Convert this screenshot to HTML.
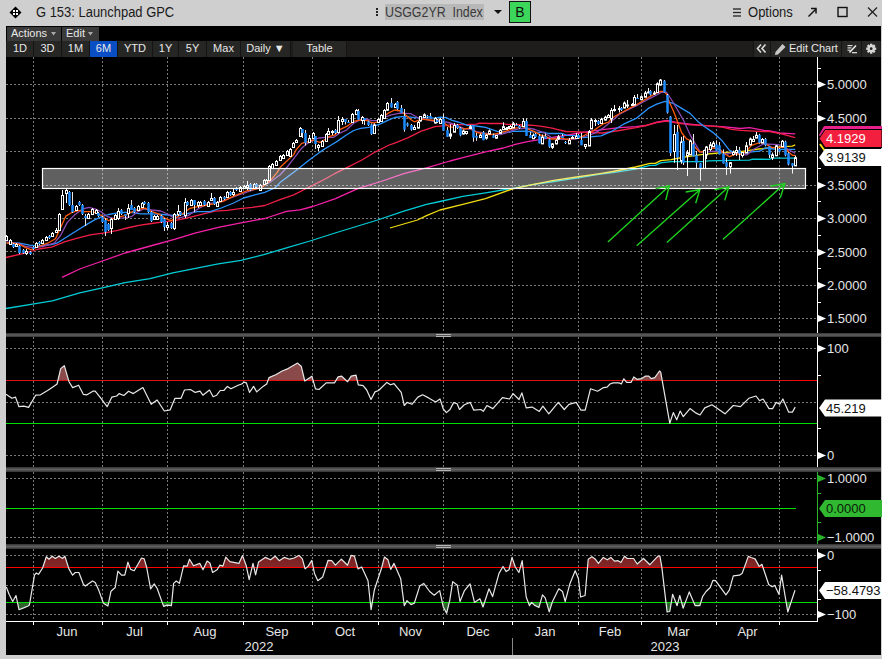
<!DOCTYPE html>
<html><head><meta charset="utf-8">
<style>
html,body{margin:0;padding:0;}
body{width:882px;height:659px;overflow:hidden;background:#cfcfcf;position:relative;font-family:"Liberation Sans",sans-serif;}
.abs{position:absolute;}
#main{position:absolute;left:6px;top:26px;width:875px;height:629px;background:#000;}
svg text{font-family:"Liberation Sans",sans-serif;}
.g{stroke:#7a7a7a;stroke-width:1;stroke-dasharray:2 2;}
.gv{stroke:#7a7a7a;stroke-width:1;stroke-dasharray:2 2;}
.tb{position:absolute;height:16px;top:41px;background:#262624;color:#e8e8e8;font-size:11px;line-height:14px;text-align:center;box-sizing:border-box;border-right:1px solid #141414;}
.tb1{position:absolute;top:27px;height:14px;background:#3a3a3a;color:#e8e8e8;font-size:11px;line-height:12px;box-sizing:border-box;padding-left:4px;}
.tri{display:inline-block;width:0;height:0;border-left:3px solid transparent;border-right:3px solid transparent;border-top:4px solid #aaa;vertical-align:middle;margin-left:4px;}
</style></head><body>
<!-- title bar -->
<svg class="abs" style="left:0;top:0" width="882" height="26">
 <polygon points="15.5,6.5 21.5,12.5 15.5,18.5 9.5,12.5" fill="#000"/><g fill="#fff"><rect x="13" y="10" width="2" height="2"/><rect x="16" y="10" width="2" height="2"/><rect x="13" y="13" width="2" height="2"/><rect x="16" y="13" width="2" height="2"/></g>
 <rect x="376" y="8" width="2" height="2" fill="#222"/><rect x="376" y="11" width="2" height="2" fill="#222"/><rect x="376" y="14" width="2" height="2" fill="#222"/>
 <rect x="385" y="4" width="99" height="16" fill="#b8b8b8"/>
 <polygon points="494,10 502,10 498,14" fill="#111"/>
 <rect x="509.5" y="1.5" width="21" height="21" fill="#3cd75a" stroke="#111" stroke-width="1"/>
 <g stroke="#222" stroke-width="1.3"><line x1="733" y1="9" x2="741" y2="9"/><line x1="733" y1="12.5" x2="741" y2="12.5"/><line x1="733" y1="16" x2="741" y2="16"/></g>
 <g stroke="#111" stroke-width="1.5" fill="none"><line x1="808.5" y1="16.5" x2="816" y2="9"/><polyline points="811,8.5 816,8.5 816,13.5"/></g>
 <rect x="838" y="7.5" width="9" height="9" fill="none" stroke="#111" stroke-width="1.4"/>
 <g stroke="#222" stroke-width="1.2"><line x1="868" y1="7.5" x2="877" y2="16.5"/><line x1="877" y1="7.5" x2="868" y2="16.5"/></g>
</svg>
<div class="abs" style="left:36px;top:4px;font-size:14px;line-height:17px;color:#1a1a1a;transform-origin:0 0;transform:scaleX(0.925);white-space:nowrap;">G 153: Launchpad GPC</div>
<div class="abs" style="left:385px;top:4px;font-size:14px;line-height:17px;color:#3a3a3a;transform-origin:0 0;transform:scaleX(0.885);white-space:nowrap;">USGG2YR&nbsp;&nbsp;Index</div>
<div class="abs" style="left:509px;top:3px;width:22px;text-align:center;font-size:14px;line-height:18px;color:#111;">B</div>
<div class="abs" style="left:748px;top:4px;font-size:14px;line-height:17px;color:#1a1a1a;transform-origin:0 0;transform:scaleX(0.93);white-space:nowrap;">Options</div>
<div id="main"></div>
<!-- toolbar row 1 -->
<div class="tb1" style="left:7px;width:54px;">Actions</div>
<div class="tb1" style="left:62px;width:37px;">Edit</div>
<!-- toolbar row 2 -->
<div class="abs" style="left:6px;top:41px;width:875px;height:16px;background:#1e1d1b;"></div>
<div class="tb" style="left:7px;width:27px;">1D</div>
<div class="tb" style="left:34px;width:28px;">3D</div>
<div class="tb" style="left:62px;width:28px;">1M</div>
<div class="tb" style="left:90px;width:28px;background:#0a4ec4;">6M</div>
<div class="tb" style="left:118px;width:35px;">YTD</div>
<div class="tb" style="left:153px;width:26px;">1Y</div>
<div class="tb" style="left:179px;width:28px;">5Y</div>
<div class="tb" style="left:207px;width:34px;">Max</div>
<div class="tb" style="left:241px;width:50px;">Daily &#9660;</div>
<div class="tb" style="left:293px;width:54px;">Table</div>
<div class="tb" style="left:753px;width:18px;border-left:1px solid #141414;"></div>
<div class="tb" style="left:771px;width:71px;text-align:left;padding-left:18px;">Edit Chart</div>
<div class="tb" style="left:842px;width:20px;"></div>
<div class="tb" style="left:862px;width:18px;border-right:none;"></div>
<svg class="abs" style="left:0;top:0" width="882" height="60">
 <polygon points="51,32 56,32 53.5,35.5" fill="#a8a8a8"/>
 <polygon points="88,32 93,32 90.5,35.5" fill="#a8a8a8"/>
 <g stroke="#dcdcdc" stroke-width="1.6" fill="none"><polyline points="761,44.5 757.5,48.5 761,52.5"/><polyline points="765.5,44.5 762,48.5 765.5,52.5"/></g>
 <g><polygon points="782.5,44 785.5,47 778,54.5 775,55 775.5,52" fill="#c8c8c8"/></g>
 <g fill="#d8d8d8"><rect x="847.5" y="45" width="5" height="1.2"/><rect x="847.5" y="47.3" width="4" height="1.2"/><rect x="847.5" y="49.6" width="3" height="1.2"/><rect x="852" y="52" width="5" height="1.3"/></g>
 <polyline points="856,45.5 849.5,52.5" stroke="#e8e8e8" stroke-width="1.6" fill="none"/>
 <g transform="translate(871.2,48.7)">
  <g fill="#d8d8d8">
   <rect x="-1.2" y="-5" width="2.4" height="10"/><rect x="-1.2" y="-5" width="2.4" height="10" transform="rotate(45)"/>
   <rect x="-1.2" y="-5" width="2.4" height="10" transform="rotate(90)"/><rect x="-1.2" y="-5" width="2.4" height="10" transform="rotate(135)"/>
   <circle r="3.6"/>
  </g>
  <circle r="1.4" fill="#222"/>
 </g>
</svg>
<svg class="abs" style="left:0;top:0" width="882" height="659">
<line x1="33.5" y1="57" x2="33.5" y2="333" class="gv"/>
<line x1="33.5" y1="337" x2="33.5" y2="467" class="gv"/>
<line x1="33.5" y1="472" x2="33.5" y2="544" class="gv"/>
<line x1="33.5" y1="549" x2="33.5" y2="621" class="gv"/>
<line x1="102.5" y1="57" x2="102.5" y2="333" class="gv"/>
<line x1="102.5" y1="337" x2="102.5" y2="467" class="gv"/>
<line x1="102.5" y1="472" x2="102.5" y2="544" class="gv"/>
<line x1="102.5" y1="549" x2="102.5" y2="621" class="gv"/>
<line x1="167.5" y1="57" x2="167.5" y2="333" class="gv"/>
<line x1="167.5" y1="337" x2="167.5" y2="467" class="gv"/>
<line x1="167.5" y1="472" x2="167.5" y2="544" class="gv"/>
<line x1="167.5" y1="549" x2="167.5" y2="621" class="gv"/>
<line x1="243.5" y1="57" x2="243.5" y2="333" class="gv"/>
<line x1="243.5" y1="337" x2="243.5" y2="467" class="gv"/>
<line x1="243.5" y1="472" x2="243.5" y2="544" class="gv"/>
<line x1="243.5" y1="549" x2="243.5" y2="621" class="gv"/>
<line x1="312.5" y1="57" x2="312.5" y2="333" class="gv"/>
<line x1="312.5" y1="337" x2="312.5" y2="467" class="gv"/>
<line x1="312.5" y1="472" x2="312.5" y2="544" class="gv"/>
<line x1="312.5" y1="549" x2="312.5" y2="621" class="gv"/>
<line x1="378.5" y1="57" x2="378.5" y2="333" class="gv"/>
<line x1="378.5" y1="337" x2="378.5" y2="467" class="gv"/>
<line x1="378.5" y1="472" x2="378.5" y2="544" class="gv"/>
<line x1="378.5" y1="549" x2="378.5" y2="621" class="gv"/>
<line x1="443.5" y1="57" x2="443.5" y2="333" class="gv"/>
<line x1="443.5" y1="337" x2="443.5" y2="467" class="gv"/>
<line x1="443.5" y1="472" x2="443.5" y2="544" class="gv"/>
<line x1="443.5" y1="549" x2="443.5" y2="621" class="gv"/>
<line x1="512.5" y1="57" x2="512.5" y2="333" class="gv"/>
<line x1="512.5" y1="337" x2="512.5" y2="467" class="gv"/>
<line x1="512.5" y1="472" x2="512.5" y2="544" class="gv"/>
<line x1="512.5" y1="549" x2="512.5" y2="621" class="gv"/>
<line x1="578.5" y1="57" x2="578.5" y2="333" class="gv"/>
<line x1="578.5" y1="337" x2="578.5" y2="467" class="gv"/>
<line x1="578.5" y1="472" x2="578.5" y2="544" class="gv"/>
<line x1="578.5" y1="549" x2="578.5" y2="621" class="gv"/>
<line x1="641.5" y1="57" x2="641.5" y2="333" class="gv"/>
<line x1="641.5" y1="337" x2="641.5" y2="467" class="gv"/>
<line x1="641.5" y1="472" x2="641.5" y2="544" class="gv"/>
<line x1="641.5" y1="549" x2="641.5" y2="621" class="gv"/>
<line x1="716.5" y1="57" x2="716.5" y2="333" class="gv"/>
<line x1="716.5" y1="337" x2="716.5" y2="467" class="gv"/>
<line x1="716.5" y1="472" x2="716.5" y2="544" class="gv"/>
<line x1="716.5" y1="549" x2="716.5" y2="621" class="gv"/>
<line x1="779.5" y1="57" x2="779.5" y2="333" class="gv"/>
<line x1="779.5" y1="337" x2="779.5" y2="467" class="gv"/>
<line x1="779.5" y1="472" x2="779.5" y2="544" class="gv"/>
<line x1="779.5" y1="549" x2="779.5" y2="621" class="gv"/>
<line x1="6" y1="84.5" x2="817" y2="84.5" class="g"/>
<line x1="6" y1="118.5" x2="817" y2="118.5" class="g"/>
<line x1="6" y1="151.5" x2="817" y2="151.5" class="g"/>
<line x1="6" y1="185.5" x2="817" y2="185.5" class="g"/>
<line x1="6" y1="218.5" x2="817" y2="218.5" class="g"/>
<line x1="6" y1="251.5" x2="817" y2="251.5" class="g"/>
<line x1="6" y1="285.5" x2="817" y2="285.5" class="g"/>
<line x1="6" y1="318.5" x2="817" y2="318.5" class="g"/>
<line x1="6" y1="348.5" x2="817" y2="348.5" class="g"/>
<line x1="6" y1="402.5" x2="817" y2="402.5" class="g"/>
<line x1="6" y1="455.5" x2="817" y2="455.5" class="g"/>
<line x1="6" y1="478.5" x2="817" y2="478.5" class="g"/>
<line x1="6" y1="537.5" x2="817" y2="537.5" class="g"/>
<line x1="6" y1="555.5" x2="817" y2="555.5" class="g"/>
<line x1="6" y1="585.5" x2="817" y2="585.5" class="g"/>
<line x1="6" y1="614.5" x2="817" y2="614.5" class="g"/>
<polyline points="6.0,308.5 34.0,303.8 52.3,300.9 79.7,292.9 102.4,287.9 125.0,282.7 150.0,278.6 172.8,272.9 195.5,268.3 218.3,263.8 241.0,260.4 263.8,254.7 286.5,247.9 310.0,241.0 335.0,233.0 358.0,226.0 377.6,220.0 403.8,211.1 426.5,204.3 440.0,201.5 462.8,196.3 485.5,192.9 512.8,188.3 531.0,184.9 553.8,181.5 576.5,178.1 600.0,174.2 612.8,172.7 635.5,169.2 650.0,165.4 655.3,165.4 660.6,162.8 671.2,161.7 703.1,161.7 708.6,160.8 731.3,160.3 749.5,160.1 752.3,159.2 769.7,159.3 771.5,158.1 795.2,158.1" fill="none" stroke="#00ccd6" stroke-width="1.3" stroke-linejoin="round" />
<polyline points="390.0,228.0 417.4,220.0 426.5,215.7 440.0,210.0 462.8,204.3 485.5,198.6 512.8,188.8 531.0,184.9 553.8,180.4 576.5,177.0 600.0,173.6 612.8,171.5 635.5,167.0 650.0,163.3 655.3,163.3 660.6,160.6 671.2,159.6 681.8,157.5 692.5,155.9 703.1,154.3 713.1,153.5 722.2,152.6 731.3,152.2 740.4,151.7 749.5,150.3 758.6,149.0 765.1,148.5 783.3,146.7 792.4,146.2 795.2,144.9" fill="none" stroke="#f0dc10" stroke-width="1.3" stroke-linejoin="round" />
<polyline points="62.0,277.4 79.7,269.0 102.4,261.0 125.0,253.0 154.0,245.0 174.4,239.4 195.0,233.2 218.3,227.4 241.0,222.8 264.8,218.5 286.5,211.4 300.0,209.8 312.8,206.5 335.5,198.6 358.3,188.3 381.0,181.5 403.8,173.6 426.5,167.9 450.0,161.0 462.8,157.6 485.5,151.9 503.2,148.0 515.3,144.4 527.4,141.7 535.0,140.4 545.2,138.7 555.5,137.0 565.7,135.3 576.0,133.5 586.2,131.8 602.7,129.7 619.4,127.6 636.1,126.7 646.0,125.5 656.7,122.2 666.7,120.5 677.6,122.6 690.1,124.2 704.0,125.7 722.2,126.7 740.4,128.5 749.5,127.6 764.0,130.3 769.7,130.8 779.7,133.0 795.2,133.9" fill="none" stroke="#f420a8" stroke-width="1.3" stroke-linejoin="round" />
<polyline points="6.0,257.5 25.8,252.9 38.7,249.0 51.6,247.1 64.5,241.9 77.4,238.1 90.3,234.8 106.3,232.6 117.7,230.4 129.0,227.5 140.4,225.2 151.7,223.5 163.0,221.8 174.4,220.7 185.7,218.4 202.5,214.2 214.9,211.1 227.4,210.4 239.9,208.6 252.3,207.3 264.8,205.5 280.0,199.6 293.7,194.8 307.3,188.0 321.0,181.2 334.6,173.7 348.3,166.9 361.9,160.0 375.6,151.8 389.2,145.0 394.0,143.3 407.7,137.9 421.3,131.1 435.0,126.6 440.0,126.2 446.1,125.6 452.1,124.4 464.3,124.7 476.4,124.1 479.4,123.2 490.0,123.5 503.2,123.5 506.2,124.4 524.4,125.0 533.5,125.3 541.8,126.4 552.1,128.1 558.9,129.8 565.7,131.5 579.4,131.8 586.0,132.3 602.7,133.0 619.4,130.5 636.1,127.6 646.0,125.5 656.7,122.7 666.7,121.2 677.6,123.2 690.1,124.8 704.0,125.3 722.2,127.1 731.3,129.4 740.4,130.3 749.5,130.8 764.0,131.7 769.7,131.7 781.5,133.9 795.2,137.6" fill="none" stroke="#f01e46" stroke-width="1.3" stroke-linejoin="round" />
<polyline points="6.5,242.6 19.4,243.2 29.7,245.2 37.4,245.8 51.6,244.5 56.8,243.2 67.1,236.8 77.4,230.3 87.7,223.9 95.0,219.6 101.8,216.7 108.6,214.5 117.7,212.8 129.0,212.2 140.4,213.9 151.7,213.9 163.0,214.5 174.4,215.6 185.7,213.9 197.5,211.7 210.0,211.7 221.2,208.0 233.6,203.0 243.6,198.0 254.8,194.9 264.8,192.4 274.8,188.0 280.0,182.6 293.7,172.3 300.5,166.9 307.3,161.4 316.0,155.0 323.5,149.6 330.4,145.5 337.2,141.4 346.0,135.3 353.7,130.5 360.5,128.4 368.7,127.4 374.1,126.1 381.0,123.7 387.8,120.3 394.6,117.5 404.2,116.4 414.5,117.7 435.0,118.1 440.0,117.1 446.1,117.7 452.1,120.4 458.2,122.0 464.3,124.1 467.3,125.3 473.4,125.6 479.4,126.5 485.5,127.4 490.0,128.9 497.1,131.4 509.2,132.3 512.3,131.4 524.4,131.1 535.0,132.2 545.2,132.5 548.7,133.5 562.3,133.5 567.1,135.3 576.0,135.6 582.8,137.6 601.0,135.9 611.0,131.7 623.6,124.2 636.1,118.4 648.3,108.4 656.7,104.2 665.0,101.3 673.4,103.4 681.7,108.4 690.1,113.4 697.8,121.4 704.0,126.2 713.1,132.6 722.2,140.8 729.5,150.3 735.9,153.1 745.0,152.6 754.1,151.7 759.6,151.2 765.1,148.0 774.2,149.0 783.3,149.4 795.2,149.4" fill="none" stroke="#2a94ff" stroke-width="1.3" stroke-linejoin="round" />
<polyline points="6.5,242.0 19.4,243.9 25.8,246.5 33.5,247.7 42.6,246.5 54.2,243.2 60.6,235.5 67.1,222.6 74.8,214.8 82.6,209.0 89.0,207.4 95.0,208.8 101.8,212.2 107.5,216.7 113.1,218.4 123.3,217.9 131.3,216.7 138.1,211.6 143.8,208.8 151.7,210.0 160.8,211.0 168.7,214.5 174.4,218.4 181.2,217.3 188.0,215.6 197.5,209.2 207.5,203.6 217.4,202.3 227.4,199.2 237.4,195.5 246.1,192.4 254.8,189.3 262.3,186.1 269.8,182.4 277.3,176.8 280.0,175.0 286.8,167.5 293.7,158.7 301.7,148.2 306.5,144.1 313.3,140.0 318.8,138.0 325.6,137.3 333.8,137.3 339.2,133.5 346.8,129.8 353.7,123.3 360.5,119.6 367.3,119.2 371.4,120.6 378.2,120.6 383.7,117.5 391.2,114.8 400.0,113.1 404.2,113.3 411.0,113.7 417.9,117.7 424.7,119.1 435.0,121.5 440.0,121.0 446.1,122.0 452.1,123.5 458.2,126.2 464.3,128.6 470.3,129.2 476.4,131.7 482.5,132.6 490.0,134.1 500.1,134.7 506.2,132.9 512.3,130.5 518.3,128.9 524.4,128.3 530.5,128.3 535.0,129.5 545.2,133.2 552.1,138.0 562.3,139.4 576.0,139.0 594.3,133.4 602.7,128.4 611.0,121.7 619.4,114.2 627.7,110.0 636.1,105.9 648.3,99.2 656.7,95.0 661.7,92.1 666.7,92.5 671.7,100.0 677.6,110.0 683.4,120.1 690.3,135.2 694.6,142.6 699.9,151.6 704.1,152.7 713.1,151.2 719.5,151.7 726.8,154.0 733.1,152.6 742.3,154.4 746.8,154.9 754.1,149.0 763.3,144.0 774.2,144.4 783.3,145.3 787.9,149.4 795.2,153.1" fill="none" stroke="#8a4ab4" stroke-width="1.3" stroke-linejoin="round" />
<polyline points="6.5,243.0 13.0,243.2 19.4,244.5 25.8,247.7 31.0,249.7 38.7,246.5 47.7,243.2 55.5,238.7 60.6,227.7 65.8,216.1 72.3,212.3 78.7,210.3 83.9,211.6 92.9,211.6 101.8,215.6 105.2,218.4 108.6,220.7 112.0,219.0 117.7,217.3 124.5,215.6 131.3,212.2 138.1,209.4 144.9,208.2 151.7,211.6 158.5,213.9 165.3,218.4 171.0,220.7 176.6,217.3 183.4,213.3 190.0,208.3 197.5,206.7 205.0,205.5 215.0,203.6 223.7,201.1 232.4,196.7 239.9,193.6 247.4,190.5 254.8,189.3 262.3,187.1 269.8,181.1 277.3,172.4 280.0,167.5 293.7,154.6 296.2,149.6 301.7,143.4 306.5,142.1 309.9,141.1 312.6,140.0 316.0,141.1 320.1,142.4 324.2,140.0 329.7,136.3 335.1,134.9 339.2,129.8 346.8,126.4 353.7,121.3 360.5,119.9 367.3,120.6 370.7,122.3 374.1,123.0 378.2,121.6 382.3,117.5 387.8,113.4 394.6,110.0 400.8,111.0 404.2,113.7 411.0,119.8 414.5,121.8 421.3,119.1 435.0,120.5 440.0,120.1 443.6,122.6 449.1,126.8 455.2,127.4 458.2,127.4 464.3,129.2 470.3,128.0 476.4,132.3 482.5,133.5 490.0,134.7 494.1,134.1 500.1,132.9 506.2,131.1 512.3,128.6 518.3,127.7 522.6,126.2 527.4,128.9 533.5,131.1 541.8,135.6 545.2,135.9 550.0,139.0 555.5,139.0 562.3,138.0 565.7,139.4 572.5,138.7 579.4,138.0 594.3,130.0 602.7,124.2 608.5,122.1 611.9,118.0 619.4,113.8 627.7,109.2 636.1,105.0 648.3,97.5 656.7,93.0 660.9,91.3 664.2,91.3 666.7,94.6 669.2,101.7 673.4,110.9 677.6,121.7 681.8,133.0 686.6,138.9 690.3,140.5 694.6,146.8 699.9,152.2 704.1,151.1 713.1,148.0 719.5,149.0 724.0,153.5 729.5,156.7 735.9,154.0 742.3,154.0 746.8,150.8 751.4,145.3 758.6,143.0 762.4,142.1 767.8,145.3 772.4,147.6 778.8,147.6 785.1,147.1 788.8,152.2 792.4,155.3 795.2,155.3" fill="none" stroke="#ff5a0a" stroke-width="1.3" stroke-linejoin="round" />
<line x1="6.5" y1="235" x2="6.5" y2="241" stroke="#fff" stroke-width="1"/>
<rect x="5.5" y="236.5" width="2" height="4" fill="#000" stroke="#fff" stroke-width="1"/>
<line x1="10.5" y1="239" x2="10.5" y2="245" stroke="#fff" stroke-width="1"/>
<rect x="9.5" y="240.5" width="2" height="4" fill="#000" stroke="#fff" stroke-width="1"/>
<line x1="13.5" y1="243" x2="13.5" y2="248" stroke="#e8e8e8" stroke-width="1"/>
<rect x="12.25" y="244" width="2.5" height="3" fill="#1e8cff"/>
<line x1="16.5" y1="243" x2="16.5" y2="247" stroke="#fff" stroke-width="1"/>
<rect x="15.5" y="244.5" width="2" height="2" fill="#000" stroke="#fff" stroke-width="1"/>
<line x1="19.5" y1="245" x2="19.5" y2="254" stroke="#e8e8e8" stroke-width="1"/>
<rect x="18.25" y="246" width="2.5" height="7" fill="#1e8cff"/>
<line x1="23.5" y1="249" x2="23.5" y2="254" stroke="#e8e8e8" stroke-width="1"/>
<rect x="22.25" y="250" width="2.5" height="3" fill="#1e8cff"/>
<line x1="26.5" y1="249" x2="26.5" y2="255" stroke="#fff" stroke-width="1"/>
<rect x="25.5" y="251.5" width="2" height="2" fill="#000" stroke="#fff" stroke-width="1"/>
<line x1="30.5" y1="251" x2="30.5" y2="255" stroke="#e8e8e8" stroke-width="1"/>
<rect x="29.25" y="252" width="2.5" height="2" fill="#1e8cff"/>
<line x1="33.5" y1="246" x2="33.5" y2="250" stroke="#e8e8e8" stroke-width="1"/>
<rect x="32.25" y="247" width="2.5" height="2" fill="#1e8cff"/>
<line x1="36.5" y1="242" x2="36.5" y2="248" stroke="#fff" stroke-width="1"/>
<rect x="35.5" y="243.5" width="2" height="4" fill="#000" stroke="#fff" stroke-width="1"/>
<line x1="39.5" y1="241" x2="39.5" y2="245" stroke="#e8e8e8" stroke-width="1"/>
<rect x="38.25" y="242" width="2.5" height="2" fill="#1e8cff"/>
<line x1="42.5" y1="239" x2="42.5" y2="244" stroke="#fff" stroke-width="1"/>
<rect x="41.5" y="240.5" width="2" height="3" fill="#000" stroke="#fff" stroke-width="1"/>
<line x1="46.5" y1="236" x2="46.5" y2="241" stroke="#fff" stroke-width="1"/>
<rect x="45.5" y="237.5" width="2" height="3" fill="#000" stroke="#fff" stroke-width="1"/>
<line x1="49.5" y1="235" x2="49.5" y2="239" stroke="#e8e8e8" stroke-width="1"/>
<rect x="48.25" y="236" width="2.5" height="2" fill="#1e8cff"/>
<line x1="52.5" y1="232" x2="52.5" y2="237" stroke="#fff" stroke-width="1"/>
<rect x="51.5" y="233.5" width="2" height="3" fill="#000" stroke="#fff" stroke-width="1"/>
<line x1="56.5" y1="228" x2="56.5" y2="233" stroke="#fff" stroke-width="1"/>
<rect x="55.5" y="230.5" width="2" height="2" fill="#000" stroke="#fff" stroke-width="1"/>
<line x1="59.5" y1="213" x2="59.5" y2="231" stroke="#fff" stroke-width="1"/>
<rect x="58.5" y="214.5" width="2" height="16" fill="#000" stroke="#fff" stroke-width="1"/>
<line x1="62.5" y1="190" x2="62.5" y2="210" stroke="#fff" stroke-width="1"/>
<rect x="61.5" y="195.5" width="2" height="14" fill="#000" stroke="#fff" stroke-width="1"/>
<line x1="66.5" y1="189" x2="66.5" y2="203" stroke="#fff" stroke-width="1"/>
<rect x="65.5" y="190.5" width="2" height="3" fill="#000" stroke="#fff" stroke-width="1"/>
<line x1="69.5" y1="191" x2="69.5" y2="206" stroke="#e8e8e8" stroke-width="1"/>
<rect x="68.25" y="192" width="2.5" height="13" fill="#1e8cff"/>
<line x1="72.5" y1="192" x2="72.5" y2="213" stroke="#e8e8e8" stroke-width="1"/>
<rect x="71.25" y="205" width="2.5" height="7" fill="#1e8cff"/>
<line x1="76.5" y1="205" x2="76.5" y2="211" stroke="#fff" stroke-width="1"/>
<rect x="75.5" y="206.5" width="2" height="4" fill="#000" stroke="#fff" stroke-width="1"/>
<line x1="79.5" y1="201" x2="79.5" y2="206" stroke="#e8e8e8" stroke-width="1"/>
<rect x="78.25" y="202" width="2.5" height="3" fill="#1e8cff"/>
<line x1="82.5" y1="204" x2="82.5" y2="215" stroke="#e8e8e8" stroke-width="1"/>
<rect x="81.25" y="205" width="2.5" height="9" fill="#1e8cff"/>
<line x1="85.5" y1="214" x2="85.5" y2="226" stroke="#e8e8e8" stroke-width="1"/>
<rect x="84.25" y="216" width="2.5" height="2" fill="#1e8cff"/>
<line x1="88.5" y1="213" x2="88.5" y2="219" stroke="#fff" stroke-width="1"/>
<rect x="87.5" y="214.5" width="2" height="4" fill="#000" stroke="#fff" stroke-width="1"/>
<line x1="92.5" y1="208" x2="92.5" y2="215" stroke="#fff" stroke-width="1"/>
<rect x="91.5" y="209.5" width="2" height="5" fill="#000" stroke="#fff" stroke-width="1"/>
<line x1="96.5" y1="209" x2="96.5" y2="214" stroke="#fff" stroke-width="1"/>
<rect x="95.5" y="210.5" width="2" height="3" fill="#000" stroke="#fff" stroke-width="1"/>
<line x1="98.5" y1="212" x2="98.5" y2="217" stroke="#e8e8e8" stroke-width="1"/>
<rect x="97.25" y="213" width="2.5" height="3" fill="#1e8cff"/>
<line x1="102.5" y1="216" x2="102.5" y2="223" stroke="#e8e8e8" stroke-width="1"/>
<rect x="101.25" y="217" width="2.5" height="5" fill="#1e8cff"/>
<line x1="105.5" y1="218" x2="105.5" y2="236" stroke="#e8e8e8" stroke-width="1"/>
<rect x="104.25" y="220" width="2.5" height="12" fill="#1e8cff"/>
<line x1="108.5" y1="223" x2="108.5" y2="231" stroke="#e8e8e8" stroke-width="1"/>
<rect x="107.25" y="224" width="2.5" height="6" fill="#1e8cff"/>
<line x1="111.5" y1="218" x2="111.5" y2="234" stroke="#fff" stroke-width="1"/>
<rect x="110.5" y="219.5" width="2" height="9" fill="#000" stroke="#fff" stroke-width="1"/>
<line x1="115.5" y1="214" x2="115.5" y2="220" stroke="#fff" stroke-width="1"/>
<rect x="114.5" y="215.5" width="2" height="4" fill="#000" stroke="#fff" stroke-width="1"/>
<line x1="118.5" y1="208" x2="118.5" y2="220" stroke="#fff" stroke-width="1"/>
<rect x="117.5" y="211.5" width="2" height="7" fill="#000" stroke="#fff" stroke-width="1"/>
<line x1="121.5" y1="209" x2="121.5" y2="215" stroke="#e8e8e8" stroke-width="1"/>
<rect x="120.25" y="210" width="2.5" height="4" fill="#1e8cff"/>
<line x1="125.5" y1="214" x2="125.5" y2="220" stroke="#e8e8e8" stroke-width="1"/>
<rect x="124.25" y="214" width="2.5" height="2" fill="#1e8cff"/>
<line x1="128.5" y1="204" x2="128.5" y2="218" stroke="#fff" stroke-width="1"/>
<rect x="127.5" y="208.5" width="2" height="5" fill="#000" stroke="#fff" stroke-width="1"/>
<line x1="131.5" y1="200" x2="131.5" y2="210" stroke="#e8e8e8" stroke-width="1"/>
<rect x="130.25" y="205" width="2.5" height="5" fill="#1e8cff"/>
<line x1="134.5" y1="207" x2="134.5" y2="213" stroke="#e8e8e8" stroke-width="1"/>
<rect x="133.25" y="208" width="2.5" height="4" fill="#1e8cff"/>
<line x1="138.5" y1="205" x2="138.5" y2="211" stroke="#fff" stroke-width="1"/>
<rect x="137.5" y="206.5" width="2" height="4" fill="#000" stroke="#fff" stroke-width="1"/>
<line x1="142.5" y1="202" x2="142.5" y2="208" stroke="#fff" stroke-width="1"/>
<rect x="141.5" y="203.5" width="2" height="4" fill="#000" stroke="#fff" stroke-width="1"/>
<line x1="144.5" y1="201" x2="144.5" y2="205" stroke="#e8e8e8" stroke-width="1"/>
<rect x="143.25" y="202" width="2.5" height="2" fill="#1e8cff"/>
<line x1="148.5" y1="202" x2="148.5" y2="213" stroke="#e8e8e8" stroke-width="1"/>
<rect x="147.25" y="203" width="2.5" height="9" fill="#1e8cff"/>
<line x1="151.5" y1="211" x2="151.5" y2="222" stroke="#e8e8e8" stroke-width="1"/>
<rect x="150.25" y="212" width="2.5" height="9" fill="#1e8cff"/>
<line x1="154.5" y1="215" x2="154.5" y2="220" stroke="#fff" stroke-width="1"/>
<rect x="153.5" y="216.5" width="2" height="3" fill="#000" stroke="#fff" stroke-width="1"/>
<line x1="157.5" y1="215" x2="157.5" y2="220" stroke="#fff" stroke-width="1"/>
<rect x="156.5" y="216.5" width="2" height="3" fill="#000" stroke="#fff" stroke-width="1"/>
<line x1="161.5" y1="215" x2="161.5" y2="223" stroke="#e8e8e8" stroke-width="1"/>
<rect x="160.25" y="216" width="2.5" height="6" fill="#1e8cff"/>
<line x1="164.5" y1="218" x2="164.5" y2="231" stroke="#e8e8e8" stroke-width="1"/>
<rect x="163.25" y="219" width="2.5" height="8" fill="#1e8cff"/>
<line x1="167.5" y1="222" x2="167.5" y2="230" stroke="#fff" stroke-width="1"/>
<rect x="166.5" y="225.5" width="2" height="2" fill="#000" stroke="#fff" stroke-width="1"/>
<line x1="171.5" y1="222" x2="171.5" y2="229" stroke="#e8e8e8" stroke-width="1"/>
<rect x="170.25" y="223" width="2.5" height="5" fill="#1e8cff"/>
<line x1="174.5" y1="213" x2="174.5" y2="230" stroke="#fff" stroke-width="1"/>
<rect x="173.5" y="214.5" width="2" height="14" fill="#000" stroke="#fff" stroke-width="1"/>
<line x1="178.5" y1="205" x2="178.5" y2="216" stroke="#fff" stroke-width="1"/>
<rect x="177.5" y="211.5" width="2" height="3" fill="#000" stroke="#fff" stroke-width="1"/>
<line x1="180.5" y1="211" x2="180.5" y2="216" stroke="#e8e8e8" stroke-width="1"/>
<rect x="179.25" y="212" width="2.5" height="3" fill="#1e8cff"/>
<line x1="185.5" y1="198" x2="185.5" y2="218" stroke="#fff" stroke-width="1"/>
<rect x="184.5" y="202.5" width="2" height="13" fill="#000" stroke="#fff" stroke-width="1"/>
<line x1="187.5" y1="201" x2="187.5" y2="206" stroke="#e8e8e8" stroke-width="1"/>
<rect x="186.25" y="202" width="2.5" height="3" fill="#1e8cff"/>
<line x1="191.5" y1="199" x2="191.5" y2="206" stroke="#fff" stroke-width="1"/>
<rect x="190.5" y="200.5" width="2" height="5" fill="#000" stroke="#fff" stroke-width="1"/>
<line x1="194.5" y1="200" x2="194.5" y2="212" stroke="#e8e8e8" stroke-width="1"/>
<rect x="193.25" y="200" width="2.5" height="5" fill="#1e8cff"/>
<line x1="198.5" y1="201" x2="198.5" y2="208" stroke="#fff" stroke-width="1"/>
<rect x="197.5" y="202.5" width="2" height="3" fill="#000" stroke="#fff" stroke-width="1"/>
<line x1="200.5" y1="201" x2="200.5" y2="206" stroke="#fff" stroke-width="1"/>
<rect x="199.5" y="202.5" width="2" height="3" fill="#000" stroke="#fff" stroke-width="1"/>
<line x1="204.5" y1="200" x2="204.5" y2="206" stroke="#e8e8e8" stroke-width="1"/>
<rect x="203.25" y="201" width="2.5" height="4" fill="#1e8cff"/>
<line x1="208.5" y1="201" x2="208.5" y2="207" stroke="#fff" stroke-width="1"/>
<rect x="207.5" y="202.5" width="2" height="4" fill="#000" stroke="#fff" stroke-width="1"/>
<line x1="211.5" y1="193" x2="211.5" y2="200" stroke="#fff" stroke-width="1"/>
<rect x="210.5" y="198.5" width="2" height="2" fill="#000" stroke="#fff" stroke-width="1"/>
<line x1="214.5" y1="197" x2="214.5" y2="205" stroke="#e8e8e8" stroke-width="1"/>
<rect x="213.25" y="198" width="2.5" height="6" fill="#1e8cff"/>
<line x1="217.5" y1="201" x2="217.5" y2="207" stroke="#fff" stroke-width="1"/>
<rect x="216.5" y="202.5" width="2" height="4" fill="#000" stroke="#fff" stroke-width="1"/>
<line x1="220.5" y1="196" x2="220.5" y2="202" stroke="#fff" stroke-width="1"/>
<rect x="219.5" y="197.5" width="2" height="4" fill="#000" stroke="#fff" stroke-width="1"/>
<line x1="224.5" y1="196" x2="224.5" y2="200" stroke="#e8e8e8" stroke-width="1"/>
<rect x="223.25" y="197" width="2.5" height="2" fill="#1e8cff"/>
<line x1="227.5" y1="191" x2="227.5" y2="198" stroke="#fff" stroke-width="1"/>
<rect x="226.5" y="192.5" width="2" height="5" fill="#000" stroke="#fff" stroke-width="1"/>
<line x1="230.5" y1="191" x2="230.5" y2="196" stroke="#e8e8e8" stroke-width="1"/>
<rect x="229.25" y="192" width="2.5" height="3" fill="#1e8cff"/>
<line x1="233.5" y1="188" x2="233.5" y2="196" stroke="#fff" stroke-width="1"/>
<rect x="232.5" y="192.5" width="2" height="2" fill="#000" stroke="#fff" stroke-width="1"/>
<line x1="236.5" y1="187" x2="236.5" y2="191" stroke="#e8e8e8" stroke-width="1"/>
<rect x="235.25" y="188" width="2.5" height="2" fill="#1e8cff"/>
<line x1="240.5" y1="186" x2="240.5" y2="192" stroke="#fff" stroke-width="1"/>
<rect x="239.5" y="187.5" width="2" height="4" fill="#000" stroke="#fff" stroke-width="1"/>
<line x1="244.5" y1="185" x2="244.5" y2="189" stroke="#fff" stroke-width="1"/>
<rect x="243.5" y="186.5" width="2" height="2" fill="#000" stroke="#fff" stroke-width="1"/>
<line x1="247.5" y1="181" x2="247.5" y2="190" stroke="#fff" stroke-width="1"/>
<rect x="246.5" y="185.5" width="2" height="2" fill="#000" stroke="#fff" stroke-width="1"/>
<line x1="250.5" y1="183" x2="250.5" y2="191" stroke="#e8e8e8" stroke-width="1"/>
<rect x="249.25" y="184" width="2.5" height="6" fill="#1e8cff"/>
<line x1="254.5" y1="183" x2="254.5" y2="189" stroke="#fff" stroke-width="1"/>
<rect x="253.5" y="184.5" width="2" height="4" fill="#000" stroke="#fff" stroke-width="1"/>
<line x1="256.5" y1="183" x2="256.5" y2="188" stroke="#e8e8e8" stroke-width="1"/>
<rect x="255.25" y="184" width="2.5" height="3" fill="#1e8cff"/>
<line x1="260.5" y1="184" x2="260.5" y2="191" stroke="#fff" stroke-width="1"/>
<rect x="259.5" y="185.5" width="2" height="5" fill="#000" stroke="#fff" stroke-width="1"/>
<line x1="264.5" y1="179" x2="264.5" y2="185" stroke="#fff" stroke-width="1"/>
<rect x="263.5" y="180.5" width="2" height="4" fill="#000" stroke="#fff" stroke-width="1"/>
<line x1="266.5" y1="179" x2="266.5" y2="184" stroke="#fff" stroke-width="1"/>
<rect x="265.5" y="180.5" width="2" height="3" fill="#000" stroke="#fff" stroke-width="1"/>
<line x1="269.5" y1="165" x2="269.5" y2="181" stroke="#fff" stroke-width="1"/>
<rect x="268.5" y="166.5" width="2" height="14" fill="#000" stroke="#fff" stroke-width="1"/>
<line x1="272.5" y1="163" x2="272.5" y2="169" stroke="#fff" stroke-width="1"/>
<rect x="271.5" y="164.5" width="2" height="4" fill="#000" stroke="#fff" stroke-width="1"/>
<line x1="276.5" y1="160" x2="276.5" y2="166" stroke="#fff" stroke-width="1"/>
<rect x="275.5" y="161.5" width="2" height="4" fill="#000" stroke="#fff" stroke-width="1"/>
<line x1="280.5" y1="155" x2="280.5" y2="161" stroke="#fff" stroke-width="1"/>
<rect x="279.5" y="156.5" width="2" height="4" fill="#000" stroke="#fff" stroke-width="1"/>
<line x1="283.5" y1="154" x2="283.5" y2="159" stroke="#fff" stroke-width="1"/>
<rect x="282.5" y="155.5" width="2" height="3" fill="#000" stroke="#fff" stroke-width="1"/>
<line x1="287.5" y1="150" x2="287.5" y2="156" stroke="#fff" stroke-width="1"/>
<rect x="286.5" y="151.5" width="2" height="4" fill="#000" stroke="#fff" stroke-width="1"/>
<line x1="290.5" y1="148" x2="290.5" y2="157" stroke="#fff" stroke-width="1"/>
<rect x="289.5" y="149.5" width="2" height="7" fill="#000" stroke="#fff" stroke-width="1"/>
<line x1="293.5" y1="142" x2="293.5" y2="148" stroke="#fff" stroke-width="1"/>
<rect x="292.5" y="143.5" width="2" height="4" fill="#000" stroke="#fff" stroke-width="1"/>
<line x1="296.5" y1="139" x2="296.5" y2="143" stroke="#fff" stroke-width="1"/>
<rect x="295.5" y="140.5" width="2" height="2" fill="#000" stroke="#fff" stroke-width="1"/>
<line x1="300.5" y1="127" x2="300.5" y2="137" stroke="#fff" stroke-width="1"/>
<rect x="299.5" y="128.5" width="2" height="8" fill="#000" stroke="#fff" stroke-width="1"/>
<line x1="302.5" y1="129" x2="302.5" y2="138" stroke="#e8e8e8" stroke-width="1"/>
<rect x="301.25" y="129" width="2.5" height="4" fill="#1e8cff"/>
<line x1="305.5" y1="130" x2="305.5" y2="145.5" stroke="#e8e8e8" stroke-width="1"/>
<rect x="304.25" y="133" width="2.5" height="10" fill="#1e8cff"/>
<line x1="309.5" y1="135" x2="309.5" y2="143" stroke="#fff" stroke-width="1"/>
<rect x="308.5" y="138.5" width="2" height="4" fill="#000" stroke="#fff" stroke-width="1"/>
<line x1="313.5" y1="132" x2="313.5" y2="139" stroke="#fff" stroke-width="1"/>
<rect x="312.5" y="133.5" width="2" height="5" fill="#000" stroke="#fff" stroke-width="1"/>
<line x1="315.5" y1="136" x2="315.5" y2="149" stroke="#e8e8e8" stroke-width="1"/>
<rect x="314.25" y="136" width="2.5" height="8" fill="#1e8cff"/>
<line x1="318.5" y1="144" x2="318.5" y2="151" stroke="#fff" stroke-width="1"/>
<rect x="317.5" y="145.5" width="2" height="2" fill="#000" stroke="#fff" stroke-width="1"/>
<line x1="322.5" y1="140" x2="322.5" y2="147" stroke="#fff" stroke-width="1"/>
<rect x="321.5" y="141.5" width="2" height="5" fill="#000" stroke="#fff" stroke-width="1"/>
<line x1="326.5" y1="133" x2="326.5" y2="142" stroke="#fff" stroke-width="1"/>
<rect x="325.5" y="134.5" width="2" height="7" fill="#000" stroke="#fff" stroke-width="1"/>
<line x1="328.5" y1="128" x2="328.5" y2="135" stroke="#fff" stroke-width="1"/>
<rect x="327.5" y="131.5" width="2" height="3" fill="#000" stroke="#fff" stroke-width="1"/>
<line x1="332.5" y1="130" x2="332.5" y2="135" stroke="#fff" stroke-width="1"/>
<rect x="331.5" y="131.5" width="2" height="1" fill="#000" stroke="#fff" stroke-width="1"/>
<line x1="335.5" y1="129" x2="335.5" y2="134" stroke="#e8e8e8" stroke-width="1"/>
<rect x="334.25" y="130" width="2.5" height="3" fill="#1e8cff"/>
<line x1="338.5" y1="116" x2="338.5" y2="133.5" stroke="#fff" stroke-width="1"/>
<rect x="337.5" y="120.5" width="2" height="12" fill="#000" stroke="#fff" stroke-width="1"/>
<line x1="342.5" y1="117" x2="342.5" y2="125" stroke="#fff" stroke-width="1"/>
<rect x="341.5" y="119.5" width="2" height="2" fill="#000" stroke="#fff" stroke-width="1"/>
<line x1="345.5" y1="119" x2="345.5" y2="124.5" stroke="#e8e8e8" stroke-width="1"/>
<rect x="344.25" y="119" width="2.5" height="3" fill="#1e8cff"/>
<line x1="348.5" y1="120" x2="348.5" y2="123" stroke="#e8e8e8" stroke-width="1"/>
<rect x="347.25" y="122" width="2.5" height="1" fill="#1e8cff"/>
<line x1="352.5" y1="113" x2="352.5" y2="123" stroke="#fff" stroke-width="1"/>
<rect x="351.5" y="114.5" width="2" height="8" fill="#000" stroke="#fff" stroke-width="1"/>
<line x1="356.5" y1="109" x2="356.5" y2="115" stroke="#fff" stroke-width="1"/>
<rect x="355.5" y="110.5" width="2" height="4" fill="#000" stroke="#fff" stroke-width="1"/>
<line x1="358.5" y1="109" x2="358.5" y2="119.6" stroke="#e8e8e8" stroke-width="1"/>
<rect x="357.25" y="111" width="2.5" height="8.599999999999994" fill="#1e8cff"/>
<line x1="362.5" y1="116" x2="362.5" y2="124" stroke="#fff" stroke-width="1"/>
<rect x="361.5" y="117.5" width="2" height="3" fill="#000" stroke="#fff" stroke-width="1"/>
<line x1="364.5" y1="118" x2="364.5" y2="125" stroke="#e8e8e8" stroke-width="1"/>
<rect x="363.25" y="118" width="2.5" height="2" fill="#1e8cff"/>
<line x1="368.5" y1="120.6" x2="368.5" y2="126" stroke="#e8e8e8" stroke-width="1"/>
<rect x="367.25" y="121.6" width="2.5" height="3.4000000000000057" fill="#1e8cff"/>
<line x1="371.5" y1="123.4" x2="371.5" y2="135" stroke="#e8e8e8" stroke-width="1"/>
<rect x="370.25" y="124.4" width="2.5" height="9.599999999999994" fill="#1e8cff"/>
<line x1="374.5" y1="123.4" x2="374.5" y2="134" stroke="#fff" stroke-width="1"/>
<rect x="373.5" y="124.9" width="2" height="8.599999999999994" fill="#000" stroke="#fff" stroke-width="1"/>
<line x1="378.5" y1="118" x2="378.5" y2="123" stroke="#fff" stroke-width="1"/>
<rect x="377.5" y="119.5" width="2" height="3" fill="#000" stroke="#fff" stroke-width="1"/>
<line x1="381.5" y1="114" x2="381.5" y2="122" stroke="#fff" stroke-width="1"/>
<rect x="380.5" y="115.5" width="2" height="6" fill="#000" stroke="#fff" stroke-width="1"/>
<line x1="384.5" y1="109" x2="384.5" y2="119" stroke="#fff" stroke-width="1"/>
<rect x="383.5" y="110.5" width="2" height="8" fill="#000" stroke="#fff" stroke-width="1"/>
<line x1="387.5" y1="102" x2="387.5" y2="110.7" stroke="#fff" stroke-width="1"/>
<rect x="386.5" y="103.5" width="2" height="6.700000000000003" fill="#000" stroke="#fff" stroke-width="1"/>
<line x1="391.5" y1="98" x2="391.5" y2="107.6" stroke="#e8e8e8" stroke-width="1"/>
<rect x="390.25" y="103" width="2.5" height="4.599999999999994" fill="#1e8cff"/>
<line x1="395.5" y1="103" x2="395.5" y2="108" stroke="#fff" stroke-width="1"/>
<rect x="394.5" y="104.5" width="2" height="3" fill="#000" stroke="#fff" stroke-width="1"/>
<line x1="397.5" y1="101" x2="397.5" y2="109.9" stroke="#e8e8e8" stroke-width="1"/>
<rect x="396.25" y="102" width="2.5" height="6.900000000000006" fill="#1e8cff"/>
<line x1="401.5" y1="105" x2="401.5" y2="113" stroke="#e8e8e8" stroke-width="1"/>
<rect x="400.25" y="108" width="2.5" height="5" fill="#1e8cff"/>
<line x1="404.5" y1="109" x2="404.5" y2="131.7" stroke="#e8e8e8" stroke-width="1"/>
<rect x="403.25" y="116" width="2.5" height="13.699999999999989" fill="#1e8cff"/>
<line x1="407.5" y1="122.5" x2="407.5" y2="126.6" stroke="#e8e8e8" stroke-width="1"/>
<rect x="406.25" y="123.5" width="2.5" height="2.0999999999999943" fill="#1e8cff"/>
<line x1="411.5" y1="124" x2="411.5" y2="130.7" stroke="#e8e8e8" stroke-width="1"/>
<rect x="410.25" y="125" width="2.5" height="4.699999999999989" fill="#1e8cff"/>
<line x1="414.5" y1="125" x2="414.5" y2="129" stroke="#fff" stroke-width="1"/>
<rect x="413.5" y="127.5" width="2" height="2" fill="#000" stroke="#fff" stroke-width="1"/>
<line x1="418.5" y1="121" x2="418.5" y2="128.6" stroke="#fff" stroke-width="1"/>
<rect x="417.5" y="122.5" width="2" height="5.599999999999994" fill="#000" stroke="#fff" stroke-width="1"/>
<line x1="420.5" y1="116" x2="420.5" y2="121.5" stroke="#fff" stroke-width="1"/>
<rect x="419.5" y="116.5" width="2" height="4.5" fill="#000" stroke="#fff" stroke-width="1"/>
<line x1="424.5" y1="113.3" x2="424.5" y2="118" stroke="#fff" stroke-width="1"/>
<rect x="423.5" y="114.8" width="2" height="2.700000000000003" fill="#000" stroke="#fff" stroke-width="1"/>
<line x1="427.5" y1="115" x2="427.5" y2="118" stroke="#e8e8e8" stroke-width="1"/>
<rect x="426.25" y="116" width="2.5" height="1" fill="#1e8cff"/>
<line x1="430.5" y1="113" x2="430.5" y2="118" stroke="#e8e8e8" stroke-width="1"/>
<rect x="429.25" y="116" width="2.5" height="2" fill="#1e8cff"/>
<line x1="435.5" y1="117" x2="435.5" y2="123.5" stroke="#fff" stroke-width="1"/>
<rect x="434.5" y="118.5" width="2" height="4.5" fill="#000" stroke="#fff" stroke-width="1"/>
<line x1="437.5" y1="119" x2="437.5" y2="123" stroke="#e8e8e8" stroke-width="1"/>
<rect x="436.25" y="120" width="2.5" height="2" fill="#1e8cff"/>
<line x1="440.5" y1="118" x2="440.5" y2="124" stroke="#fff" stroke-width="1"/>
<rect x="439.5" y="119.5" width="2" height="4" fill="#000" stroke="#fff" stroke-width="1"/>
<line x1="443.5" y1="113.5" x2="443.5" y2="130.8" stroke="#e8e8e8" stroke-width="1"/>
<rect x="442.25" y="119" width="2.5" height="11.800000000000011" fill="#1e8cff"/>
<line x1="447.5" y1="127" x2="447.5" y2="136.8" stroke="#e8e8e8" stroke-width="1"/>
<rect x="446.25" y="130.1" width="2.5" height="6.700000000000017" fill="#1e8cff"/>
<line x1="450.5" y1="124.4" x2="450.5" y2="139" stroke="#fff" stroke-width="1"/>
<rect x="449.5" y="134.0" width="2" height="2.0999999999999943" fill="#000" stroke="#fff" stroke-width="1"/>
<line x1="454.5" y1="123" x2="454.5" y2="131.7" stroke="#fff" stroke-width="1"/>
<rect x="453.5" y="125.5" width="2" height="6.699999999999989" fill="#000" stroke="#fff" stroke-width="1"/>
<line x1="457.5" y1="124" x2="457.5" y2="129" stroke="#e8e8e8" stroke-width="1"/>
<rect x="456.25" y="125" width="2.5" height="3" fill="#1e8cff"/>
<line x1="460.5" y1="127" x2="460.5" y2="136.3" stroke="#e8e8e8" stroke-width="1"/>
<rect x="459.25" y="128" width="2.5" height="7.300000000000011" fill="#1e8cff"/>
<line x1="463.5" y1="129.5" x2="463.5" y2="134.5" stroke="#fff" stroke-width="1"/>
<rect x="462.5" y="131.0" width="2" height="3.0" fill="#000" stroke="#fff" stroke-width="1"/>
<line x1="466.5" y1="131" x2="466.5" y2="134.7" stroke="#fff" stroke-width="1"/>
<rect x="465.5" y="131.5" width="2" height="2" fill="#000" stroke="#fff" stroke-width="1"/>
<line x1="470.5" y1="125.2" x2="470.5" y2="129" stroke="#fff" stroke-width="1"/>
<rect x="469.5" y="126.7" width="2" height="1.7999999999999972" fill="#000" stroke="#fff" stroke-width="1"/>
<line x1="473.5" y1="126" x2="473.5" y2="141.7" stroke="#e8e8e8" stroke-width="1"/>
<rect x="472.25" y="126.2" width="2.5" height="11.499999999999986" fill="#1e8cff"/>
<line x1="476.5" y1="133" x2="476.5" y2="140.8" stroke="#e8e8e8" stroke-width="1"/>
<rect x="475.25" y="135.9" width="2.5" height="1.799999999999983" fill="#1e8cff"/>
<line x1="480.5" y1="133.5" x2="480.5" y2="138" stroke="#fff" stroke-width="1"/>
<rect x="479.5" y="135.2" width="2" height="2.4000000000000057" fill="#000" stroke="#fff" stroke-width="1"/>
<line x1="483.5" y1="131" x2="483.5" y2="140.2" stroke="#e8e8e8" stroke-width="1"/>
<rect x="482.25" y="132.3" width="2.5" height="7.899999999999977" fill="#1e8cff"/>
<line x1="486.5" y1="134" x2="486.5" y2="139.6" stroke="#fff" stroke-width="1"/>
<rect x="485.5" y="135.2" width="2" height="3.0" fill="#000" stroke="#fff" stroke-width="1"/>
<line x1="489.5" y1="129.5" x2="489.5" y2="134.5" stroke="#fff" stroke-width="1"/>
<rect x="488.5" y="131.0" width="2" height="3.0" fill="#000" stroke="#fff" stroke-width="1"/>
<line x1="493.5" y1="133.5" x2="493.5" y2="137.7" stroke="#e8e8e8" stroke-width="1"/>
<rect x="492.25" y="135.3" width="2.5" height="2.3999999999999773" fill="#1e8cff"/>
<line x1="496.5" y1="135" x2="496.5" y2="138.6" stroke="#fff" stroke-width="1"/>
<rect x="495.5" y="135.5" width="2" height="2.6999999999999886" fill="#000" stroke="#fff" stroke-width="1"/>
<line x1="500.5" y1="129" x2="500.5" y2="132.9" stroke="#fff" stroke-width="1"/>
<rect x="499.5" y="130.3" width="2" height="3.0999999999999943" fill="#000" stroke="#fff" stroke-width="1"/>
<line x1="503.5" y1="122.3" x2="503.5" y2="129.2" stroke="#fff" stroke-width="1"/>
<rect x="502.5" y="126.7" width="2" height="2.999999999999986" fill="#000" stroke="#fff" stroke-width="1"/>
<line x1="506.5" y1="127" x2="506.5" y2="130" stroke="#fff" stroke-width="1"/>
<rect x="505.5" y="128.5" width="2" height="1" fill="#000" stroke="#fff" stroke-width="1"/>
<line x1="508.5" y1="126" x2="508.5" y2="129" stroke="#fff" stroke-width="1"/>
<rect x="507.5" y="127.5" width="2" height="1" fill="#000" stroke="#fff" stroke-width="1"/>
<line x1="510.5" y1="125" x2="510.5" y2="129" stroke="#fff" stroke-width="1"/>
<rect x="509.5" y="126.5" width="2" height="2" fill="#000" stroke="#fff" stroke-width="1"/>
<line x1="513.5" y1="122" x2="513.5" y2="127.4" stroke="#fff" stroke-width="1"/>
<rect x="512.5" y="123.7" width="2" height="4.200000000000003" fill="#000" stroke="#fff" stroke-width="1"/>
<line x1="516.5" y1="123" x2="516.5" y2="126" stroke="#e8e8e8" stroke-width="1"/>
<rect x="515.25" y="125" width="2.5" height="1" fill="#1e8cff"/>
<line x1="519.5" y1="125" x2="519.5" y2="129" stroke="#e8e8e8" stroke-width="1"/>
<rect x="518.25" y="126" width="2.5" height="2" fill="#1e8cff"/>
<line x1="523.5" y1="118.3" x2="523.5" y2="126.2" stroke="#fff" stroke-width="1"/>
<rect x="522.5" y="121.5" width="2" height="5.200000000000003" fill="#000" stroke="#fff" stroke-width="1"/>
<line x1="526.5" y1="118.3" x2="526.5" y2="135.9" stroke="#e8e8e8" stroke-width="1"/>
<rect x="525.25" y="121" width="2.5" height="14.900000000000006" fill="#1e8cff"/>
<line x1="530.5" y1="132" x2="530.5" y2="138" stroke="#e8e8e8" stroke-width="1"/>
<rect x="529.25" y="135" width="2.5" height="3" fill="#1e8cff"/>
<line x1="533.5" y1="133.5" x2="533.5" y2="138.3" stroke="#fff" stroke-width="1"/>
<rect x="532.5" y="135.2" width="2" height="3.6000000000000227" fill="#000" stroke="#fff" stroke-width="1"/>
<line x1="535.5" y1="133" x2="535.5" y2="138" stroke="#e8e8e8" stroke-width="1"/>
<rect x="534.25" y="134" width="2.5" height="3" fill="#1e8cff"/>
<line x1="539.5" y1="134" x2="539.5" y2="143.4" stroke="#e8e8e8" stroke-width="1"/>
<rect x="538.25" y="135.9" width="2.5" height="7.5" fill="#1e8cff"/>
<line x1="542.5" y1="134.5" x2="542.5" y2="143.4" stroke="#fff" stroke-width="1"/>
<rect x="541.5" y="137.1" width="2" height="6.800000000000011" fill="#000" stroke="#fff" stroke-width="1"/>
<line x1="545.5" y1="133.5" x2="545.5" y2="138.7" stroke="#e8e8e8" stroke-width="1"/>
<rect x="544.25" y="136.3" width="2.5" height="2.3999999999999773" fill="#1e8cff"/>
<line x1="549.5" y1="138.4" x2="549.5" y2="147.9" stroke="#e8e8e8" stroke-width="1"/>
<rect x="548.25" y="139.4" width="2.5" height="7.5" fill="#1e8cff"/>
<line x1="552.5" y1="143" x2="552.5" y2="149" stroke="#fff" stroke-width="1"/>
<rect x="551.5" y="143.9" width="2" height="3.5" fill="#000" stroke="#fff" stroke-width="1"/>
<line x1="556.5" y1="139" x2="556.5" y2="144.4" stroke="#fff" stroke-width="1"/>
<rect x="555.5" y="140.5" width="2" height="3.4000000000000057" fill="#000" stroke="#fff" stroke-width="1"/>
<line x1="558.5" y1="135" x2="558.5" y2="140" stroke="#fff" stroke-width="1"/>
<rect x="557.5" y="137.0" width="2" height="2.0" fill="#000" stroke="#fff" stroke-width="1"/>
<line x1="562.5" y1="134" x2="562.5" y2="138" stroke="#e8e8e8" stroke-width="1"/>
<rect x="561.25" y="136" width="2.5" height="2" fill="#1e8cff"/>
<line x1="565.5" y1="141" x2="565.5" y2="144" stroke="#e8e8e8" stroke-width="1"/>
<rect x="564.25" y="142" width="2.5" height="1" fill="#1e8cff"/>
<line x1="569.5" y1="138" x2="569.5" y2="143.4" stroke="#fff" stroke-width="1"/>
<rect x="568.5" y="140.5" width="2" height="3.4000000000000057" fill="#000" stroke="#fff" stroke-width="1"/>
<line x1="572.5" y1="136" x2="572.5" y2="139" stroke="#fff" stroke-width="1"/>
<rect x="571.5" y="137.5" width="2" height="1" fill="#000" stroke="#fff" stroke-width="1"/>
<line x1="576.5" y1="133" x2="576.5" y2="138" stroke="#fff" stroke-width="1"/>
<rect x="575.5" y="136.5" width="2" height="2" fill="#000" stroke="#fff" stroke-width="1"/>
<line x1="578.5" y1="134" x2="578.5" y2="139" stroke="#e8e8e8" stroke-width="1"/>
<rect x="577.25" y="135" width="2.5" height="3" fill="#1e8cff"/>
<line x1="581.5" y1="133" x2="581.5" y2="145.2" stroke="#e8e8e8" stroke-width="1"/>
<rect x="580.25" y="140" width="2.5" height="5.199999999999989" fill="#1e8cff"/>
<line x1="585.5" y1="144" x2="585.5" y2="149" stroke="#fff" stroke-width="1"/>
<rect x="584.5" y="144.5" width="2" height="2" fill="#000" stroke="#fff" stroke-width="1"/>
<line x1="589.5" y1="130" x2="589.5" y2="145.5" stroke="#fff" stroke-width="1"/>
<rect x="588.5" y="131.7" width="2" height="14.300000000000011" fill="#000" stroke="#fff" stroke-width="1"/>
<line x1="591.5" y1="118" x2="591.5" y2="128.4" stroke="#fff" stroke-width="1"/>
<rect x="590.5" y="120.1" width="2" height="8.800000000000011" fill="#000" stroke="#fff" stroke-width="1"/>
<line x1="595.5" y1="119" x2="595.5" y2="126" stroke="#fff" stroke-width="1"/>
<rect x="594.5" y="120.5" width="2" height="1" fill="#000" stroke="#fff" stroke-width="1"/>
<line x1="598.5" y1="120" x2="598.5" y2="125" stroke="#e8e8e8" stroke-width="1"/>
<rect x="597.25" y="121" width="2.5" height="3" fill="#1e8cff"/>
<line x1="601.5" y1="117.8" x2="601.5" y2="124" stroke="#fff" stroke-width="1"/>
<rect x="600.5" y="119.3" width="2" height="4.200000000000003" fill="#000" stroke="#fff" stroke-width="1"/>
<line x1="605.5" y1="115.7" x2="605.5" y2="120.6" stroke="#fff" stroke-width="1"/>
<rect x="604.5" y="117.2" width="2" height="2.8999999999999915" fill="#000" stroke="#fff" stroke-width="1"/>
<line x1="608.5" y1="114" x2="608.5" y2="118" stroke="#fff" stroke-width="1"/>
<rect x="607.5" y="115.5" width="2" height="2" fill="#000" stroke="#fff" stroke-width="1"/>
<line x1="611.5" y1="108" x2="611.5" y2="123" stroke="#fff" stroke-width="1"/>
<rect x="610.5" y="110.5" width="2" height="8.400000000000006" fill="#000" stroke="#fff" stroke-width="1"/>
<line x1="614.5" y1="105" x2="614.5" y2="111.7" stroke="#fff" stroke-width="1"/>
<rect x="613.5" y="109.5" width="2" height="1" fill="#000" stroke="#fff" stroke-width="1"/>
<line x1="619.5" y1="106" x2="619.5" y2="112.5" stroke="#fff" stroke-width="1"/>
<rect x="618.5" y="108.5" width="2" height="1" fill="#000" stroke="#fff" stroke-width="1"/>
<line x1="621.5" y1="107" x2="621.5" y2="111" stroke="#e8e8e8" stroke-width="1"/>
<rect x="620.25" y="108" width="2.5" height="2" fill="#1e8cff"/>
<line x1="624.5" y1="101.5" x2="624.5" y2="108.5" stroke="#fff" stroke-width="1"/>
<rect x="623.5" y="103.0" width="2" height="5.0" fill="#000" stroke="#fff" stroke-width="1"/>
<line x1="627.5" y1="100" x2="627.5" y2="108" stroke="#fff" stroke-width="1"/>
<rect x="626.5" y="105.0" width="2" height="1.0" fill="#000" stroke="#fff" stroke-width="1"/>
<line x1="632.5" y1="103" x2="632.5" y2="106" stroke="#fff" stroke-width="1"/>
<rect x="631.5" y="104.5" width="2" height="1" fill="#000" stroke="#fff" stroke-width="1"/>
<line x1="634.5" y1="95" x2="634.5" y2="104.6" stroke="#fff" stroke-width="1"/>
<rect x="633.5" y="97.5" width="2" height="7.599999999999994" fill="#000" stroke="#fff" stroke-width="1"/>
<line x1="637.5" y1="94" x2="637.5" y2="99" stroke="#e8e8e8" stroke-width="1"/>
<rect x="636.25" y="98" width="2.5" height="1" fill="#1e8cff"/>
<line x1="641.5" y1="95.3" x2="641.5" y2="100.2" stroke="#fff" stroke-width="1"/>
<rect x="640.5" y="96.8" width="2" height="2.9000000000000057" fill="#000" stroke="#fff" stroke-width="1"/>
<line x1="645.5" y1="91" x2="645.5" y2="96.7" stroke="#fff" stroke-width="1"/>
<rect x="644.5" y="93.0" width="2" height="4.200000000000003" fill="#000" stroke="#fff" stroke-width="1"/>
<line x1="648.5" y1="88" x2="648.5" y2="93" stroke="#fff" stroke-width="1"/>
<rect x="647.5" y="92.0" width="2" height="1.0" fill="#000" stroke="#fff" stroke-width="1"/>
<line x1="650.5" y1="90" x2="650.5" y2="95.6" stroke="#e8e8e8" stroke-width="1"/>
<rect x="649.25" y="91" width="2.5" height="3.5999999999999943" fill="#1e8cff"/>
<line x1="654.5" y1="91" x2="654.5" y2="95" stroke="#fff" stroke-width="1"/>
<rect x="653.5" y="93.0" width="2" height="1.0" fill="#000" stroke="#fff" stroke-width="1"/>
<line x1="657.5" y1="82.3" x2="657.5" y2="93.1" stroke="#fff" stroke-width="1"/>
<rect x="656.5" y="83.8" width="2" height="8.799999999999997" fill="#000" stroke="#fff" stroke-width="1"/>
<line x1="660.5" y1="79" x2="660.5" y2="85.5" stroke="#fff" stroke-width="1"/>
<rect x="659.5" y="80.1" width="2" height="5.0" fill="#000" stroke="#fff" stroke-width="1"/>
<line x1="664.5" y1="80" x2="664.5" y2="92.5" stroke="#e8e8e8" stroke-width="1"/>
<rect x="663.25" y="80.8" width="2.5" height="11.700000000000003" fill="#1e8cff"/>
<line x1="667.5" y1="94" x2="667.5" y2="113.6" stroke="#e8e8e8" stroke-width="1"/>
<rect x="666.25" y="95" width="2.5" height="17.599999999999994" fill="#1e8cff"/>
<line x1="670.5" y1="116" x2="670.5" y2="156" stroke="#e8e8e8" stroke-width="1"/>
<rect x="669.25" y="116.6" width="2.5" height="36.599999999999994" fill="#1e8cff"/>
<line x1="674.5" y1="125" x2="674.5" y2="162.8" stroke="#fff" stroke-width="1"/>
<rect x="673.5" y="134.5" width="2" height="17" fill="#000" stroke="#fff" stroke-width="1"/>
<line x1="677.5" y1="125" x2="677.5" y2="170" stroke="#e8e8e8" stroke-width="1"/>
<rect x="676.25" y="132" width="2.5" height="25.5" fill="#1e8cff"/>
<line x1="681.5" y1="136.8" x2="681.5" y2="163.8" stroke="#fff" stroke-width="1"/>
<rect x="680.5" y="142.0" width="2" height="19.099999999999994" fill="#000" stroke="#fff" stroke-width="1"/>
<line x1="683.5" y1="136" x2="683.5" y2="165" stroke="#e8e8e8" stroke-width="1"/>
<rect x="682.25" y="141" width="2.5" height="21.80000000000001" fill="#1e8cff"/>
<line x1="687.5" y1="150" x2="687.5" y2="176" stroke="#fff" stroke-width="1"/>
<rect x="686.5" y="152.7" width="2" height="3.1000000000000227" fill="#000" stroke="#fff" stroke-width="1"/>
<line x1="690.5" y1="139.5" x2="690.5" y2="154.3" stroke="#fff" stroke-width="1"/>
<rect x="689.5" y="141.0" width="2" height="13.800000000000011" fill="#000" stroke="#fff" stroke-width="1"/>
<line x1="693.5" y1="134" x2="693.5" y2="156.4" stroke="#e8e8e8" stroke-width="1"/>
<rect x="692.25" y="143.7" width="2.5" height="12.700000000000017" fill="#1e8cff"/>
<line x1="696.5" y1="151" x2="696.5" y2="168" stroke="#e8e8e8" stroke-width="1"/>
<rect x="695.25" y="155.3" width="2.5" height="7.5" fill="#1e8cff"/>
<line x1="700.5" y1="163" x2="700.5" y2="180.8" stroke="#e8e8e8" stroke-width="1"/>
<rect x="699.25" y="163.3" width="2.5" height="4.699999999999989" fill="#1e8cff"/>
<line x1="704.5" y1="149.5" x2="704.5" y2="168" stroke="#fff" stroke-width="1"/>
<rect x="703.5" y="150.5" width="2" height="18" fill="#000" stroke="#fff" stroke-width="1"/>
<line x1="706.5" y1="146" x2="706.5" y2="159" stroke="#fff" stroke-width="1"/>
<rect x="705.5" y="147.0" width="2" height="7.900000000000006" fill="#000" stroke="#fff" stroke-width="1"/>
<line x1="710.5" y1="142" x2="710.5" y2="151" stroke="#fff" stroke-width="1"/>
<rect x="709.5" y="144.9" width="2" height="4.599999999999994" fill="#000" stroke="#fff" stroke-width="1"/>
<line x1="713.5" y1="141" x2="713.5" y2="146.2" stroke="#fff" stroke-width="1"/>
<rect x="712.5" y="143.1" width="2" height="3.5999999999999943" fill="#000" stroke="#fff" stroke-width="1"/>
<line x1="716.5" y1="140.3" x2="716.5" y2="150.8" stroke="#e8e8e8" stroke-width="1"/>
<rect x="715.25" y="144.4" width="2.5" height="6.400000000000006" fill="#1e8cff"/>
<line x1="719.5" y1="142" x2="719.5" y2="154.4" stroke="#e8e8e8" stroke-width="1"/>
<rect x="718.25" y="145.3" width="2.5" height="9.099999999999994" fill="#1e8cff"/>
<line x1="723.5" y1="149.4" x2="723.5" y2="163.5" stroke="#e8e8e8" stroke-width="1"/>
<rect x="722.25" y="153.5" width="2.5" height="10.0" fill="#1e8cff"/>
<line x1="726.5" y1="158" x2="726.5" y2="175" stroke="#e8e8e8" stroke-width="1"/>
<rect x="725.25" y="162.2" width="2.5" height="4.5" fill="#1e8cff"/>
<line x1="730.5" y1="162" x2="730.5" y2="173.6" stroke="#fff" stroke-width="1"/>
<rect x="729.5" y="162.7" width="2" height="4.100000000000023" fill="#000" stroke="#fff" stroke-width="1"/>
<line x1="733.5" y1="150.5" x2="733.5" y2="155.5" stroke="#fff" stroke-width="1"/>
<rect x="732.5" y="152.5" width="2" height="2" fill="#000" stroke="#fff" stroke-width="1"/>
<line x1="736.5" y1="146" x2="736.5" y2="156" stroke="#fff" stroke-width="1"/>
<rect x="735.5" y="150.5" width="2" height="2" fill="#000" stroke="#fff" stroke-width="1"/>
<line x1="739.5" y1="147" x2="739.5" y2="160" stroke="#e8e8e8" stroke-width="1"/>
<rect x="738.25" y="149.9" width="2.5" height="3.5999999999999943" fill="#1e8cff"/>
<line x1="742.5" y1="152" x2="742.5" y2="157.5" stroke="#fff" stroke-width="1"/>
<rect x="741.5" y="152.5" width="2" height="3" fill="#000" stroke="#fff" stroke-width="1"/>
<line x1="746.5" y1="142" x2="746.5" y2="152.6" stroke="#fff" stroke-width="1"/>
<rect x="745.5" y="145.8" width="2" height="7.299999999999983" fill="#000" stroke="#fff" stroke-width="1"/>
<line x1="750.5" y1="137.5" x2="750.5" y2="145.4" stroke="#fff" stroke-width="1"/>
<rect x="749.5" y="139.0" width="2" height="5.900000000000006" fill="#000" stroke="#fff" stroke-width="1"/>
<line x1="753.5" y1="136" x2="753.5" y2="141.5" stroke="#fff" stroke-width="1"/>
<rect x="752.5" y="139.5" width="2" height="2" fill="#000" stroke="#fff" stroke-width="1"/>
<line x1="756.5" y1="132" x2="756.5" y2="137.6" stroke="#fff" stroke-width="1"/>
<rect x="755.5" y="135.3" width="2" height="2.799999999999983" fill="#000" stroke="#fff" stroke-width="1"/>
<line x1="759.5" y1="133.8" x2="759.5" y2="143.6" stroke="#e8e8e8" stroke-width="1"/>
<rect x="758.25" y="134.8" width="2.5" height="7.799999999999983" fill="#1e8cff"/>
<line x1="762.5" y1="138" x2="762.5" y2="142.6" stroke="#fff" stroke-width="1"/>
<rect x="761.5" y="139.5" width="2" height="3.5999999999999943" fill="#000" stroke="#fff" stroke-width="1"/>
<line x1="765.5" y1="138" x2="765.5" y2="146.3" stroke="#e8e8e8" stroke-width="1"/>
<rect x="764.25" y="139" width="2.5" height="6.300000000000011" fill="#1e8cff"/>
<line x1="769.5" y1="146" x2="769.5" y2="158" stroke="#e8e8e8" stroke-width="1"/>
<rect x="768.25" y="146.2" width="2.5" height="8.700000000000017" fill="#1e8cff"/>
<line x1="772.5" y1="152.6" x2="772.5" y2="160" stroke="#fff" stroke-width="1"/>
<rect x="771.5" y="154.9" width="2" height="2.799999999999983" fill="#000" stroke="#fff" stroke-width="1"/>
<line x1="776.5" y1="144.9" x2="776.5" y2="155.3" stroke="#fff" stroke-width="1"/>
<rect x="775.5" y="145.8" width="2" height="10.0" fill="#000" stroke="#fff" stroke-width="1"/>
<line x1="779.5" y1="148" x2="779.5" y2="152.7" stroke="#e8e8e8" stroke-width="1"/>
<rect x="778.25" y="149" width="2.5" height="2.6999999999999886" fill="#1e8cff"/>
<line x1="782.5" y1="140" x2="782.5" y2="146.2" stroke="#fff" stroke-width="1"/>
<rect x="781.5" y="141.3" width="2" height="5.399999999999977" fill="#000" stroke="#fff" stroke-width="1"/>
<line x1="785.5" y1="140.7" x2="785.5" y2="156.3" stroke="#e8e8e8" stroke-width="1"/>
<rect x="784.25" y="141.7" width="2.5" height="13.600000000000023" fill="#1e8cff"/>
<line x1="788.5" y1="152.1" x2="788.5" y2="165.4" stroke="#e8e8e8" stroke-width="1"/>
<rect x="787.25" y="153.1" width="2.5" height="11.300000000000011" fill="#1e8cff"/>
<line x1="792.5" y1="163" x2="792.5" y2="173.6" stroke="#e8e8e8" stroke-width="1"/>
<rect x="791.25" y="163.1" width="2.5" height="2.700000000000017" fill="#1e8cff"/>
<line x1="795.5" y1="155.5" x2="795.5" y2="165.4" stroke="#fff" stroke-width="1"/>
<rect x="794.5" y="157.7" width="2" height="8.200000000000017" fill="#000" stroke="#fff" stroke-width="1"/>
<rect x="42.5" y="168.5" width="763" height="20" fill="rgba(255,255,255,0.375)" stroke="#fff" stroke-width="1.2"/>
<polyline points="607.9,241.9 669.2,185.9" stroke="#1ed21e" stroke-width="1.4" fill="none"/>
<polyline points="655.6,188.6 669.2,185.9 665.8,200" stroke="#1ed21e" stroke-width="1.4" fill="none"/>
<polyline points="636.7,245.7 699.8,189.7" stroke="#1ed21e" stroke-width="1.4" fill="none"/>
<polyline points="685.7,192 699.8,189.7 695.7,203.3" stroke="#1ed21e" stroke-width="1.4" fill="none"/>
<polyline points="666.9,242.6 728.8,186.8" stroke="#1ed21e" stroke-width="1.4" fill="none"/>
<polyline points="714.5,189.7 728.8,186.8 724.7,200.4" stroke="#1ed21e" stroke-width="1.4" fill="none"/>
<polyline points="722.9,239.6 784.8,183.6" stroke="#1ed21e" stroke-width="1.4" fill="none"/>
<polyline points="770.5,186.3 784.8,183.6 780.3,197.7" stroke="#1ed21e" stroke-width="1.4" fill="none"/>
<line x1="6" y1="380.5" x2="817" y2="380.5" stroke="#ff0000" stroke-width="1"/>
<line x1="6" y1="423.5" x2="817" y2="423.5" stroke="#00e000" stroke-width="1"/>
<clipPath id="ob1"><rect x="0" y="300" width="817" height="80.5"/></clipPath>
<polygon points="6,380.5 6.0,394.3 11.9,398.3 15.5,397.1 19.0,406.7 23.8,406.2 28.6,407.4 35.7,395.2 40.5,394.8 47.6,390.5 53.6,386.4 57.1,384.0 60.7,368.6 64.3,365.7 69.0,381.7 72.6,387.6 78.6,385.2 83.3,394.3 86.9,394.8 92.9,391.2 95.2,391.2 100.0,397.1 107.1,406.7 111.9,397.1 116.7,396.0 119.0,393.6 123.8,395.5 128.6,391.2 133.3,393.6 142.9,387.6 151.2,404.3 157.1,400.0 164.3,411.0 170.2,409.8 175.0,398.3 181.0,398.3 184.5,390.0 190.5,389.5 195.2,392.4 200.0,391.2 202.9,395.2 209.5,390.0 213.1,396.7 216.7,395.2 220.2,390.5 223.8,390.5 227.4,386.4 231.0,388.8 238.1,385.2 241.7,384.0 244.0,382.1 246.4,382.9 249.5,392.4 253.6,386.4 256.7,391.9 263.1,386.4 266.7,384.0 269.0,377.6 276.2,374.5 282.1,371.0 288.1,368.6 297.6,363.1 301.2,366.2 304.8,381.0 311.9,376.2 315.5,388.8 319.0,389.5 326.2,382.9 334.5,382.9 338.1,376.9 341.7,376.2 347.6,381.7 351.2,376.2 356.0,375.2 358.3,384.8 363.1,385.7 366.7,390.0 371.0,399.5 375.0,391.9 378.6,390.5 386.9,382.4 390.5,384.8 394.0,383.6 401.2,392.4 404.3,405.5 407.1,402.4 411.9,404.3 417.9,397.1 422.6,394.8 428.6,397.9 435.7,401.9 440.0,399.0 443.3,409.0 446.4,412.6 450.0,409.5 453.6,402.6 457.1,403.8 459.5,409.5 464.3,404.8 470.2,402.4 473.8,410.2 481.0,409.5 483.3,411.4 486.9,405.5 492.9,408.6 502.4,397.6 509.5,399.0 513.1,393.6 519.0,399.5 521.9,392.9 526.2,407.9 532.1,407.1 539.3,411.4 542.9,406.2 548.8,413.8 558.3,402.4 564.3,409.5 569.0,404.3 576.2,402.4 581.0,410.2 585.2,410.2 590.5,388.8 597.6,391.2 603.6,387.6 607.1,387.1 610.0,384.0 613.1,382.9 619.0,382.9 621.4,384.0 623.8,378.8 626.7,382.4 631.0,382.4 633.8,376.9 636.9,379.3 641.7,378.6 645.2,376.2 648.8,376.2 651.2,378.6 654.8,377.6 659.5,371.0 660.7,372.1 669.8,423.3 673.3,412.6 676.7,419.8 680.2,411.0 683.3,416.7 690.0,408.6 695.2,412.6 700.0,415.0 704.8,407.9 711.9,404.8 716.7,407.9 725.0,413.8 733.3,405.5 740.5,406.7 748.8,398.3 756.0,396.0 759.5,400.7 763.1,399.0 769.0,408.6 772.6,408.6 776.2,402.4 779.8,404.3 782.9,399.0 788.6,412.1 792.4,412.1 795.2,407.1 795.2,380.5" fill="#8a4a4a" clip-path="url(#ob1)"/>
<polyline points="6.0,394.3 11.9,398.3 15.5,397.1 19.0,406.7 23.8,406.2 28.6,407.4 35.7,395.2 40.5,394.8 47.6,390.5 53.6,386.4 57.1,384.0 60.7,368.6 64.3,365.7 69.0,381.7 72.6,387.6 78.6,385.2 83.3,394.3 86.9,394.8 92.9,391.2 95.2,391.2 100.0,397.1 107.1,406.7 111.9,397.1 116.7,396.0 119.0,393.6 123.8,395.5 128.6,391.2 133.3,393.6 142.9,387.6 151.2,404.3 157.1,400.0 164.3,411.0 170.2,409.8 175.0,398.3 181.0,398.3 184.5,390.0 190.5,389.5 195.2,392.4 200.0,391.2 202.9,395.2 209.5,390.0 213.1,396.7 216.7,395.2 220.2,390.5 223.8,390.5 227.4,386.4 231.0,388.8 238.1,385.2 241.7,384.0 244.0,382.1 246.4,382.9 249.5,392.4 253.6,386.4 256.7,391.9 263.1,386.4 266.7,384.0 269.0,377.6 276.2,374.5 282.1,371.0 288.1,368.6 297.6,363.1 301.2,366.2 304.8,381.0 311.9,376.2 315.5,388.8 319.0,389.5 326.2,382.9 334.5,382.9 338.1,376.9 341.7,376.2 347.6,381.7 351.2,376.2 356.0,375.2 358.3,384.8 363.1,385.7 366.7,390.0 371.0,399.5 375.0,391.9 378.6,390.5 386.9,382.4 390.5,384.8 394.0,383.6 401.2,392.4 404.3,405.5 407.1,402.4 411.9,404.3 417.9,397.1 422.6,394.8 428.6,397.9 435.7,401.9 440.0,399.0 443.3,409.0 446.4,412.6 450.0,409.5 453.6,402.6 457.1,403.8 459.5,409.5 464.3,404.8 470.2,402.4 473.8,410.2 481.0,409.5 483.3,411.4 486.9,405.5 492.9,408.6 502.4,397.6 509.5,399.0 513.1,393.6 519.0,399.5 521.9,392.9 526.2,407.9 532.1,407.1 539.3,411.4 542.9,406.2 548.8,413.8 558.3,402.4 564.3,409.5 569.0,404.3 576.2,402.4 581.0,410.2 585.2,410.2 590.5,388.8 597.6,391.2 603.6,387.6 607.1,387.1 610.0,384.0 613.1,382.9 619.0,382.9 621.4,384.0 623.8,378.8 626.7,382.4 631.0,382.4 633.8,376.9 636.9,379.3 641.7,378.6 645.2,376.2 648.8,376.2 651.2,378.6 654.8,377.6 659.5,371.0 660.7,372.1 669.8,423.3 673.3,412.6 676.7,419.8 680.2,411.0 683.3,416.7 690.0,408.6 695.2,412.6 700.0,415.0 704.8,407.9 711.9,404.8 716.7,407.9 725.0,413.8 733.3,405.5 740.5,406.7 748.8,398.3 756.0,396.0 759.5,400.7 763.1,399.0 769.0,408.6 772.6,408.6 776.2,402.4 779.8,404.3 782.9,399.0 788.6,412.1 792.4,412.1 795.2,407.1" fill="none" stroke="#e8e8e8" stroke-width="1.2" stroke-linejoin="round" />
<line x1="6" y1="508.5" x2="796" y2="508.5" stroke="#00e000" stroke-width="1"/>
<defs><linearGradient id="gr" x1="0" y1="0" x2="0" y2="1"><stop offset="0" stop-color="#7a1e1e"/><stop offset="1" stop-color="#a05050"/></linearGradient><linearGradient id="gg" x1="0" y1="0" x2="0" y2="1"><stop offset="0" stop-color="#4a8a4a"/><stop offset="1" stop-color="#2a5a2a"/></linearGradient></defs>
<clipPath id="ob4"><rect x="0" y="540" width="817" height="27.5"/></clipPath>
<clipPath id="os4"><rect x="0" y="602.5" width="817" height="30"/></clipPath>
<polygon points="6,567.5 6.3,587.0 9.1,594.3 12.7,601.5 16.0,595.5 19.0,609.7 23.6,607.9 28.1,606.0 29.4,605.1 34.5,575.2 36.3,573.0 38.5,574.3 42.6,568.0 46.3,556.7 49.0,559.2 52.2,556.2 55.3,558.5 59.0,556.2 62.6,558.5 64.9,556.2 68.9,568.9 72.6,575.2 75.3,572.5 78.9,572.5 83.4,584.3 85.3,586.1 92.5,581.0 95.2,582.5 98.9,590.6 103.4,603.3 107.9,606.0 111.0,591.2 115.2,587.5 117.9,571.2 121.5,575.2 124.8,575.2 127.9,562.1 130.6,569.4 134.2,570.7 141.5,558.0 144.2,558.9 146.6,567.0 150.6,588.8 154.2,583.9 157.3,588.8 163.6,606.4 167.2,605.1 171.4,605.7 173.6,583.4 176.3,581.0 179.4,583.4 183.6,565.8 187.2,566.1 189.5,559.2 193.5,565.8 199.9,563.4 203.0,569.8 207.1,561.1 209.9,562.9 212.6,572.5 217.1,569.8 219.8,565.2 222.9,566.1 225.8,557.1 229.8,561.6 238.9,563.4 242.5,555.6 246.1,565.2 249.2,579.7 253.0,563.4 255.6,574.8 258.5,562.1 265.2,557.4 270.6,559.8 275.2,556.2 279.2,560.7 284.2,557.4 289.7,559.2 294.2,558.0 299.1,555.3 302.4,558.9 305.1,568.9 308.2,566.1 311.8,560.3 314.5,573.4 317.8,580.7 322.7,577.0 328.1,560.3 331.7,560.7 335.4,565.2 341.4,559.2 347.5,565.2 351.2,555.3 354.4,556.2 358.0,568.9 361.7,567.0 368.0,580.7 371.1,609.7 374.4,589.7 381.6,568.0 384.4,557.1 388.0,559.8 390.7,569.4 394.0,563.4 400.7,578.8 404.3,605.7 407.0,600.6 411.0,604.6 414.3,603.3 419.7,586.1 423.7,583.4 429.7,591.5 434.2,595.2 439.7,590.6 443.3,607.0 446.6,613.3 449.7,600.6 452.7,581.6 457.3,585.2 460.0,601.5 464.5,590.6 470.0,583.9 474.5,602.4 479.9,598.8 483.0,607.0 489.0,588.8 492.6,596.6 499.0,573.4 503.0,566.5 506.2,571.6 509.0,569.8 512.0,557.4 515.3,567.0 518.9,572.5 522.2,560.7 526.2,597.0 529.5,605.7 531.6,602.4 534.4,605.1 538.9,607.5 542.5,594.8 545.2,597.9 549.2,611.9 552.5,601.5 558.8,588.8 562.5,591.5 565.2,601.5 569.7,584.3 575.2,570.7 578.4,578.5 580.6,597.0 585.1,595.5 588.2,559.2 591.9,556.7 595.1,558.9 598.4,563.4 603.3,557.4 607.3,559.8 610.9,557.4 614.5,561.1 618.1,560.7 620.9,562.5 624.5,556.2 627.2,558.5 633.6,558.5 637.2,564.0 643.5,558.5 649.9,564.7 658.0,556.2 659.9,556.2 661.7,566.1 667.1,611.9 669.8,611.5 672.6,594.3 677.1,605.7 679.8,595.5 683.1,608.2 689.3,591.9 695.2,605.7 699.8,605.7 702.7,596.3 706.1,591.5 710.2,587.5 712.9,580.4 715.6,580.7 725.9,594.9 729.3,590.2 733.3,575.9 739.5,575.2 742.2,573.2 748.3,556.4 751.0,557.5 755.1,558.9 759.2,566.4 761.9,564.3 768.7,584.5 772.1,586.8 774.8,585.4 778.9,594.3 781.6,575.2 787.8,612.0 795.0,590.2 795,567.5" fill="url(#gr)" clip-path="url(#ob4)"/>
<polygon points="6,602.5 6.3,587.0 9.1,594.3 12.7,601.5 16.0,595.5 19.0,609.7 23.6,607.9 28.1,606.0 29.4,605.1 34.5,575.2 36.3,573.0 38.5,574.3 42.6,568.0 46.3,556.7 49.0,559.2 52.2,556.2 55.3,558.5 59.0,556.2 62.6,558.5 64.9,556.2 68.9,568.9 72.6,575.2 75.3,572.5 78.9,572.5 83.4,584.3 85.3,586.1 92.5,581.0 95.2,582.5 98.9,590.6 103.4,603.3 107.9,606.0 111.0,591.2 115.2,587.5 117.9,571.2 121.5,575.2 124.8,575.2 127.9,562.1 130.6,569.4 134.2,570.7 141.5,558.0 144.2,558.9 146.6,567.0 150.6,588.8 154.2,583.9 157.3,588.8 163.6,606.4 167.2,605.1 171.4,605.7 173.6,583.4 176.3,581.0 179.4,583.4 183.6,565.8 187.2,566.1 189.5,559.2 193.5,565.8 199.9,563.4 203.0,569.8 207.1,561.1 209.9,562.9 212.6,572.5 217.1,569.8 219.8,565.2 222.9,566.1 225.8,557.1 229.8,561.6 238.9,563.4 242.5,555.6 246.1,565.2 249.2,579.7 253.0,563.4 255.6,574.8 258.5,562.1 265.2,557.4 270.6,559.8 275.2,556.2 279.2,560.7 284.2,557.4 289.7,559.2 294.2,558.0 299.1,555.3 302.4,558.9 305.1,568.9 308.2,566.1 311.8,560.3 314.5,573.4 317.8,580.7 322.7,577.0 328.1,560.3 331.7,560.7 335.4,565.2 341.4,559.2 347.5,565.2 351.2,555.3 354.4,556.2 358.0,568.9 361.7,567.0 368.0,580.7 371.1,609.7 374.4,589.7 381.6,568.0 384.4,557.1 388.0,559.8 390.7,569.4 394.0,563.4 400.7,578.8 404.3,605.7 407.0,600.6 411.0,604.6 414.3,603.3 419.7,586.1 423.7,583.4 429.7,591.5 434.2,595.2 439.7,590.6 443.3,607.0 446.6,613.3 449.7,600.6 452.7,581.6 457.3,585.2 460.0,601.5 464.5,590.6 470.0,583.9 474.5,602.4 479.9,598.8 483.0,607.0 489.0,588.8 492.6,596.6 499.0,573.4 503.0,566.5 506.2,571.6 509.0,569.8 512.0,557.4 515.3,567.0 518.9,572.5 522.2,560.7 526.2,597.0 529.5,605.7 531.6,602.4 534.4,605.1 538.9,607.5 542.5,594.8 545.2,597.9 549.2,611.9 552.5,601.5 558.8,588.8 562.5,591.5 565.2,601.5 569.7,584.3 575.2,570.7 578.4,578.5 580.6,597.0 585.1,595.5 588.2,559.2 591.9,556.7 595.1,558.9 598.4,563.4 603.3,557.4 607.3,559.8 610.9,557.4 614.5,561.1 618.1,560.7 620.9,562.5 624.5,556.2 627.2,558.5 633.6,558.5 637.2,564.0 643.5,558.5 649.9,564.7 658.0,556.2 659.9,556.2 661.7,566.1 667.1,611.9 669.8,611.5 672.6,594.3 677.1,605.7 679.8,595.5 683.1,608.2 689.3,591.9 695.2,605.7 699.8,605.7 702.7,596.3 706.1,591.5 710.2,587.5 712.9,580.4 715.6,580.7 725.9,594.9 729.3,590.2 733.3,575.9 739.5,575.2 742.2,573.2 748.3,556.4 751.0,557.5 755.1,558.9 759.2,566.4 761.9,564.3 768.7,584.5 772.1,586.8 774.8,585.4 778.9,594.3 781.6,575.2 787.8,612.0 795.0,590.2 795,602.5" fill="url(#gg)" clip-path="url(#os4)"/>
<line x1="6" y1="567.5" x2="817" y2="567.5" stroke="#ff0000" stroke-width="1"/>
<line x1="6" y1="602.5" x2="817" y2="602.5" stroke="#00e000" stroke-width="1"/>
<polyline points="6.3,587.0 9.1,594.3 12.7,601.5 16.0,595.5 19.0,609.7 23.6,607.9 28.1,606.0 29.4,605.1 34.5,575.2 36.3,573.0 38.5,574.3 42.6,568.0 46.3,556.7 49.0,559.2 52.2,556.2 55.3,558.5 59.0,556.2 62.6,558.5 64.9,556.2 68.9,568.9 72.6,575.2 75.3,572.5 78.9,572.5 83.4,584.3 85.3,586.1 92.5,581.0 95.2,582.5 98.9,590.6 103.4,603.3 107.9,606.0 111.0,591.2 115.2,587.5 117.9,571.2 121.5,575.2 124.8,575.2 127.9,562.1 130.6,569.4 134.2,570.7 141.5,558.0 144.2,558.9 146.6,567.0 150.6,588.8 154.2,583.9 157.3,588.8 163.6,606.4 167.2,605.1 171.4,605.7 173.6,583.4 176.3,581.0 179.4,583.4 183.6,565.8 187.2,566.1 189.5,559.2 193.5,565.8 199.9,563.4 203.0,569.8 207.1,561.1 209.9,562.9 212.6,572.5 217.1,569.8 219.8,565.2 222.9,566.1 225.8,557.1 229.8,561.6 238.9,563.4 242.5,555.6 246.1,565.2 249.2,579.7 253.0,563.4 255.6,574.8 258.5,562.1 265.2,557.4 270.6,559.8 275.2,556.2 279.2,560.7 284.2,557.4 289.7,559.2 294.2,558.0 299.1,555.3 302.4,558.9 305.1,568.9 308.2,566.1 311.8,560.3 314.5,573.4 317.8,580.7 322.7,577.0 328.1,560.3 331.7,560.7 335.4,565.2 341.4,559.2 347.5,565.2 351.2,555.3 354.4,556.2 358.0,568.9 361.7,567.0 368.0,580.7 371.1,609.7 374.4,589.7 381.6,568.0 384.4,557.1 388.0,559.8 390.7,569.4 394.0,563.4 400.7,578.8 404.3,605.7 407.0,600.6 411.0,604.6 414.3,603.3 419.7,586.1 423.7,583.4 429.7,591.5 434.2,595.2 439.7,590.6 443.3,607.0 446.6,613.3 449.7,600.6 452.7,581.6 457.3,585.2 460.0,601.5 464.5,590.6 470.0,583.9 474.5,602.4 479.9,598.8 483.0,607.0 489.0,588.8 492.6,596.6 499.0,573.4 503.0,566.5 506.2,571.6 509.0,569.8 512.0,557.4 515.3,567.0 518.9,572.5 522.2,560.7 526.2,597.0 529.5,605.7 531.6,602.4 534.4,605.1 538.9,607.5 542.5,594.8 545.2,597.9 549.2,611.9 552.5,601.5 558.8,588.8 562.5,591.5 565.2,601.5 569.7,584.3 575.2,570.7 578.4,578.5 580.6,597.0 585.1,595.5 588.2,559.2 591.9,556.7 595.1,558.9 598.4,563.4 603.3,557.4 607.3,559.8 610.9,557.4 614.5,561.1 618.1,560.7 620.9,562.5 624.5,556.2 627.2,558.5 633.6,558.5 637.2,564.0 643.5,558.5 649.9,564.7 658.0,556.2 659.9,556.2 661.7,566.1 667.1,611.9 669.8,611.5 672.6,594.3 677.1,605.7 679.8,595.5 683.1,608.2 689.3,591.9 695.2,605.7 699.8,605.7 702.7,596.3 706.1,591.5 710.2,587.5 712.9,580.4 715.6,580.7 725.9,594.9 729.3,590.2 733.3,575.9 739.5,575.2 742.2,573.2 748.3,556.4 751.0,557.5 755.1,558.9 759.2,566.4 761.9,564.3 768.7,584.5 772.1,586.8 774.8,585.4 778.9,594.3 781.6,575.2 787.8,612.0 795.0,590.2" fill="none" stroke="#e8e8e8" stroke-width="1.2" stroke-linejoin="round" />
<rect x="6" y="333" width="875" height="4" fill="url(#sep)"/>
<rect x="436" y="334" width="15" height="1" fill="#b4b4b4"/><rect x="436" y="336" width="15" height="1" fill="#b4b4b4"/>
<rect x="6" y="467" width="875" height="5" fill="url(#sep)"/>
<rect x="436" y="468" width="15" height="1" fill="#b4b4b4"/><rect x="436" y="470" width="15" height="1" fill="#b4b4b4"/>
<rect x="6" y="544" width="875" height="5" fill="url(#sep)"/>
<rect x="436" y="545" width="15" height="1" fill="#b4b4b4"/><rect x="436" y="547" width="15" height="1" fill="#b4b4b4"/>
<defs><linearGradient id="sep" x1="0" y1="0" x2="0" y2="1"><stop offset="0" stop-color="#333"/><stop offset="0.5" stop-color="#606060"/><stop offset="1" stop-color="#333"/></linearGradient></defs>
<line x1="817.5" y1="57" x2="817.5" y2="333" stroke="#fff" stroke-width="1"/>
<line x1="817.5" y1="337" x2="817.5" y2="467" stroke="#fff" stroke-width="1"/>
<line x1="817.5" y1="472" x2="817.5" y2="544" stroke="#2ab42a" stroke-width="1"/>
<line x1="817.5" y1="549" x2="817.5" y2="622" stroke="#fff" stroke-width="1"/>
<line x1="6" y1="621.5" x2="818" y2="621.5" stroke="#fff" stroke-width="1"/>
<line x1="33.5" y1="622" x2="33.5" y2="625" stroke="#fff" stroke-width="1"/>
<line x1="102.5" y1="622" x2="102.5" y2="625" stroke="#fff" stroke-width="1"/>
<line x1="167.5" y1="622" x2="167.5" y2="625" stroke="#fff" stroke-width="1"/>
<line x1="243.5" y1="622" x2="243.5" y2="625" stroke="#fff" stroke-width="1"/>
<line x1="312.5" y1="622" x2="312.5" y2="625" stroke="#fff" stroke-width="1"/>
<line x1="378.5" y1="622" x2="378.5" y2="625" stroke="#fff" stroke-width="1"/>
<line x1="443.5" y1="622" x2="443.5" y2="625" stroke="#fff" stroke-width="1"/>
<line x1="512.5" y1="622" x2="512.5" y2="625" stroke="#fff" stroke-width="1"/>
<line x1="578.5" y1="622" x2="578.5" y2="625" stroke="#fff" stroke-width="1"/>
<line x1="641.5" y1="622" x2="641.5" y2="625" stroke="#fff" stroke-width="1"/>
<line x1="716.5" y1="622" x2="716.5" y2="625" stroke="#fff" stroke-width="1"/>
<line x1="779.5" y1="622" x2="779.5" y2="625" stroke="#fff" stroke-width="1"/>
<line x1="512.5" y1="638" x2="512.5" y2="655" stroke="#888" stroke-width="1"/>
<polygon points="818,81 826,84.5 818,88" fill="#fff"/>
<polygon points="818,115 826,118.5 818,122" fill="#fff"/>
<polygon points="818,182 826,185.5 818,189" fill="#fff"/>
<polygon points="818,215 826,218.5 818,222" fill="#fff"/>
<polygon points="818,249 826,252.5 818,256" fill="#fff"/>
<polygon points="818,282 826,285.5 818,289" fill="#fff"/>
<polygon points="818,315 826,318.5 818,322" fill="#fff"/>
<line x1="818" y1="68.5" x2="821" y2="68.5" stroke="#fff" stroke-width="1"/>
<line x1="818" y1="101.5" x2="821" y2="101.5" stroke="#fff" stroke-width="1"/>
<line x1="818" y1="168.5" x2="821" y2="168.5" stroke="#fff" stroke-width="1"/>
<line x1="818" y1="201.5" x2="821" y2="201.5" stroke="#fff" stroke-width="1"/>
<line x1="818" y1="235.5" x2="821" y2="235.5" stroke="#fff" stroke-width="1"/>
<line x1="818" y1="268.5" x2="821" y2="268.5" stroke="#fff" stroke-width="1"/>
<line x1="818" y1="302.5" x2="821" y2="302.5" stroke="#fff" stroke-width="1"/>
<polygon points="818,345 826,348.5 818,352" fill="#fff"/>
<polygon points="818,452 826,455.5 818,459" fill="#fff"/>
<line x1="818" y1="375.5" x2="821" y2="375.5" stroke="#fff" stroke-width="1"/>
<line x1="818" y1="428.5" x2="821" y2="428.5" stroke="#fff" stroke-width="1"/>
<polygon points="818,475 826,478.5 818,482" fill="#2ab42a"/>
<polygon points="818,534 826,537.5 818,541" fill="#2ab42a"/>
<line x1="818" y1="493.5" x2="821" y2="493.5" stroke="#2ab42a" stroke-width="1"/>
<line x1="818" y1="522.5" x2="821" y2="522.5" stroke="#2ab42a" stroke-width="1"/>
<polygon points="818,552 826,555.5 818,559" fill="#fff"/>
<polygon points="818,611 826,614.5 818,618" fill="#fff"/>
<line x1="818" y1="570.5" x2="821" y2="570.5" stroke="#fff" stroke-width="1"/>
<line x1="818" y1="599.5" x2="821" y2="599.5" stroke="#fff" stroke-width="1"/>
<polygon points="819,135 824,126 882,126 882,142 824,142" fill="#e8208c"/>
<line x1="820" y1="144" x2="824.5" y2="150.5" stroke="#f0dc10" stroke-width="2"/>
<polygon points="819,138.5 825,129.5 882,129.5 882,147.5 825,147.5" fill="#f2203e" stroke="#000" stroke-width="1"/>
<polygon points="819,157.5 825,149 882,149 882,166 825,166" fill="#ffffff"/>
<polygon points="819,408.0 825,399.5 882,399.5 882,416.5 825,416.5" fill="#ffffff"/>
<polygon points="819,508.5 825,500 882,500 882,517 825,517" fill="#30b830"/>
<polygon points="819,590.5 825,582 882,582 882,599 825,599" fill="#ffffff"/>
<text x="827" y="89" fill="#e6e6e6" font-size="13" text-anchor="start" >5.0000</text>
<text x="827" y="123" fill="#e6e6e6" font-size="13" text-anchor="start" >4.5000</text>
<text x="827" y="190" fill="#e6e6e6" font-size="13" text-anchor="start" >3.5000</text>
<text x="827" y="223" fill="#e6e6e6" font-size="13" text-anchor="start" >3.0000</text>
<text x="827" y="257" fill="#e6e6e6" font-size="13" text-anchor="start" >2.5000</text>
<text x="827" y="290" fill="#e6e6e6" font-size="13" text-anchor="start" >2.0000</text>
<text x="827" y="323" fill="#e6e6e6" font-size="13" text-anchor="start" >1.5000</text>
<text x="827" y="353" fill="#e6e6e6" font-size="13" text-anchor="start" >100</text>
<text x="827" y="460" fill="#e6e6e6" font-size="13" text-anchor="start" >0</text>
<text x="827" y="483" fill="#e6e6e6" font-size="13" text-anchor="start" >1.0000</text>
<text x="827" y="542" fill="#e6e6e6" font-size="13" text-anchor="start" >−1.0000</text>
<text x="827" y="560" fill="#e6e6e6" font-size="13" text-anchor="start" >0</text>
<text x="827" y="619" fill="#e6e6e6" font-size="13" text-anchor="start" >−100</text>
<text x="826" y="143.3" fill="#fff" font-size="13" text-anchor="start" >4.1929</text>
<text x="826" y="162.3" fill="#111" font-size="13" text-anchor="start" >3.9139</text>
<text x="826" y="412.8" fill="#111" font-size="13" text-anchor="start" >45.219</text>
<text x="826" y="513.3" fill="#0a200a" font-size="13" text-anchor="start" >0.0000</text>
<text x="826" y="595.3" fill="#111" font-size="13" text-anchor="start" >−58.4793</text>
<text x="67" y="636" fill="#e6e6e6" font-size="13" text-anchor="middle" >Jun</text>
<text x="134.5" y="636" fill="#e6e6e6" font-size="13" text-anchor="middle" >Jul</text>
<text x="205" y="636" fill="#e6e6e6" font-size="13" text-anchor="middle" >Aug</text>
<text x="277" y="636" fill="#e6e6e6" font-size="13" text-anchor="middle" >Sep</text>
<text x="345" y="636" fill="#e6e6e6" font-size="13" text-anchor="middle" >Oct</text>
<text x="410.5" y="636" fill="#e6e6e6" font-size="13" text-anchor="middle" >Nov</text>
<text x="478" y="636" fill="#e6e6e6" font-size="13" text-anchor="middle" >Dec</text>
<text x="545" y="636" fill="#e6e6e6" font-size="13" text-anchor="middle" >Jan</text>
<text x="610" y="636" fill="#e6e6e6" font-size="13" text-anchor="middle" >Feb</text>
<text x="678.5" y="636" fill="#e6e6e6" font-size="13" text-anchor="middle" >Mar</text>
<text x="747.5" y="636" fill="#e6e6e6" font-size="13" text-anchor="middle" >Apr</text>
<text x="259" y="651" fill="#e6e6e6" font-size="13" text-anchor="middle" >2022</text>
<text x="665" y="651" fill="#e6e6e6" font-size="13" text-anchor="middle" >2023</text>
</svg>
</body></html>
